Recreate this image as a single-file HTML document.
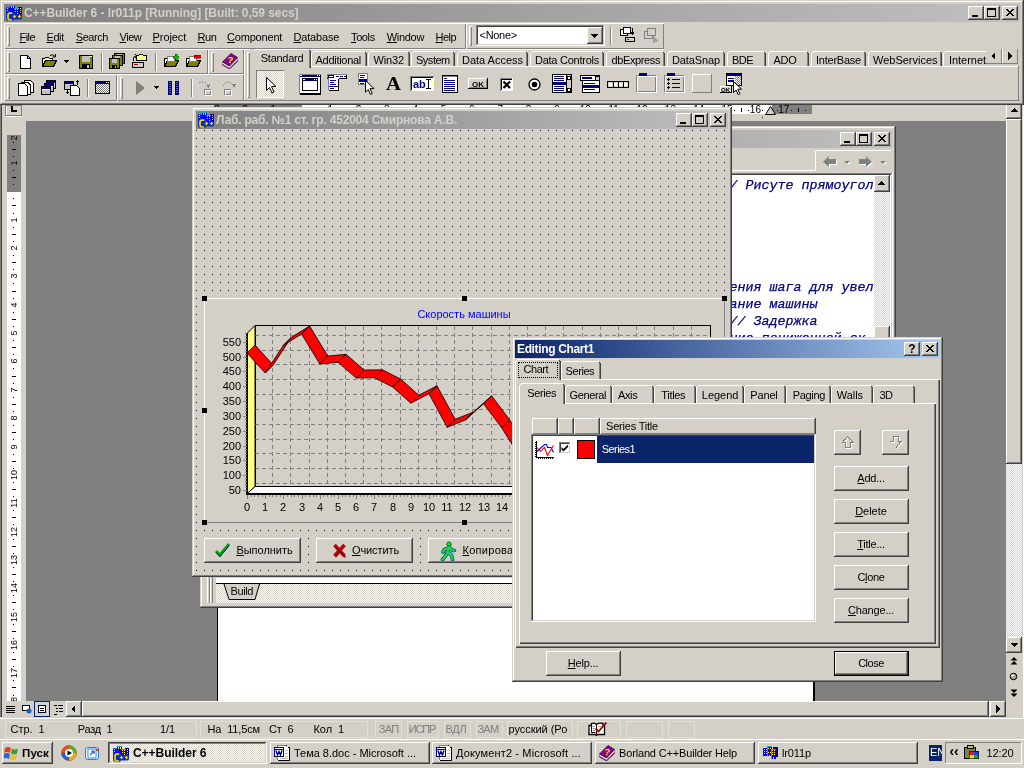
<!DOCTYPE html>
<html><head><meta charset="utf-8"><title>C++Builder 6</title>
<style>
html,body{margin:0;padding:0;}
body{width:1024px;height:768px;overflow:hidden;background:#d4d0c8;font-family:"Liberation Sans",sans-serif;font-size:11px;color:#000;}
#root{will-change:transform;position:relative;width:1024px;height:768px;overflow:hidden;}
#root div,#root span,#root svg{position:absolute;box-sizing:border-box;}
#root span{white-space:pre;line-height:13px;}
.face{background:#d4d0c8;}
.win{background:#d4d0c8;box-shadow:inset -1px -1px #404040,inset 1px 1px #d4d0c8,inset -2px -2px #808080,inset 2px 2px #fff;}
.btn{background:#d4d0c8;box-shadow:inset -1px -1px #404040,inset 1px 1px #fff,inset -2px -2px #808080,inset 2px 2px #d4d0c8;}
.sunk{box-shadow:inset -1px -1px #fff,inset 1px 1px #808080,inset -2px -2px #d4d0c8,inset 2px 2px #404040;}
.thin-sunk{box-shadow:inset -1px -1px #fff,inset 1px 1px #808080;}
.thin-rais{box-shadow:inset -1px -1px #808080,inset 1px 1px #fff;}
.chk{background:repeating-conic-gradient(#fff 0 25%,#d4d0c8 0 50%) 0 0/2px 2px;}
.b{font-weight:bold;}
u{text-decoration:underline;text-underline-offset:1px;}

</style></head>
<body>
<div id="root"><svg width="0" height="0" style="left:0;top:0"><defs><pattern id="dotpat" width="2" height="2" patternUnits="userSpaceOnUse"><rect width="2" height="2" fill="#fff"/><rect width="1" height="1" fill="#808080"/><rect x="1" y="1" width="1" height="1" fill="#808080"/></pattern></defs></svg>
<!-- p_word -->
<div class="face" style="left:0px;top:105px;width:1024px;height:635px;"></div><div style="left:0px;top:105px;width:1px;height:612px;background:#808080;"></div><div style="left:1px;top:105px;width:1px;height:612px;background:#404040;"></div><div style="left:5px;top:105px;width:17px;height:11px;background:#d4d0c8;border:1px solid #808080;box-shadow:inset 1px 0 #fff;"></div><div style="left:5px;top:116px;width:17px;height:1px;background:#fff;"></div><div style="left:11px;top:106px;width:2px;height:6px;background:#000;"></div><div style="left:11px;top:110px;width:6px;height:2px;background:#000;"></div><div style="left:214px;top:105px;width:88px;height:9px;background:#808080;"></div><div style="left:302px;top:105px;width:470px;height:9px;background:#fff;"></div><div style="left:772px;top:105px;width:40px;height:9px;background:#808080;"></div><span style="left:320.2px;top:104px;width:20px;text-align:center;font-size:10px;line-height:12px;">1</span><span style="left:348.5px;top:104px;width:20px;text-align:center;font-size:10px;line-height:12px;">2</span><span style="left:376.9px;top:104px;width:20px;text-align:center;font-size:10px;line-height:12px;">3</span><span style="left:405.2px;top:104px;width:20px;text-align:center;font-size:10px;line-height:12px;">4</span><span style="left:433.6px;top:104px;width:20px;text-align:center;font-size:10px;line-height:12px;">5</span><span style="left:461.9px;top:104px;width:20px;text-align:center;font-size:10px;line-height:12px;">6</span><span style="left:490.2px;top:104px;width:20px;text-align:center;font-size:10px;line-height:12px;">7</span><span style="left:518.6px;top:104px;width:20px;text-align:center;font-size:10px;line-height:12px;">8</span><span style="left:547.0px;top:104px;width:20px;text-align:center;font-size:10px;line-height:12px;">9</span><span style="left:575.3px;top:104px;width:20px;text-align:center;font-size:10px;line-height:12px;">10</span><span style="left:603.7px;top:104px;width:20px;text-align:center;font-size:10px;line-height:12px;">11</span><span style="left:632.0px;top:104px;width:20px;text-align:center;font-size:10px;line-height:12px;">12</span><span style="left:660.4px;top:104px;width:20px;text-align:center;font-size:10px;line-height:12px;">13</span><span style="left:688.7px;top:104px;width:20px;text-align:center;font-size:10px;line-height:12px;">14</span><span style="left:717.0px;top:104px;width:20px;text-align:center;font-size:10px;line-height:12px;">15</span><span style="left:745.4px;top:104px;width:20px;text-align:center;font-size:10px;line-height:12px;">16</span><span style="left:773.8px;top:104px;width:20px;text-align:center;font-size:10px;line-height:12px;">17</span><span style="left:263.4px;top:104px;width:20px;text-align:center;font-size:10px;line-height:12px;">1</span><span style="left:235.1px;top:104px;width:20px;text-align:center;font-size:10px;line-height:12px;">2</span><span style="left:206.8px;top:104px;width:20px;text-align:center;font-size:10px;line-height:12px;">3</span><div style="left:224px;top:110px;width:1px;height:1px;background:#000;"></div><div style="left:231px;top:108px;width:1px;height:4px;background:#000;"></div><div style="left:238px;top:110px;width:1px;height:1px;background:#000;"></div><div style="left:252px;top:110px;width:1px;height:1px;background:#000;"></div><div style="left:259px;top:108px;width:1px;height:4px;background:#000;"></div><div style="left:266px;top:110px;width:1px;height:1px;background:#000;"></div><div style="left:281px;top:110px;width:1px;height:1px;background:#000;"></div><div style="left:288px;top:108px;width:1px;height:4px;background:#000;"></div><div style="left:295px;top:110px;width:1px;height:1px;background:#000;"></div><div style="left:309px;top:110px;width:1px;height:1px;background:#000;"></div><div style="left:316px;top:108px;width:1px;height:4px;background:#000;"></div><div style="left:323px;top:110px;width:1px;height:1px;background:#000;"></div><div style="left:337px;top:110px;width:1px;height:1px;background:#000;"></div><div style="left:344px;top:108px;width:1px;height:4px;background:#000;"></div><div style="left:351px;top:110px;width:1px;height:1px;background:#000;"></div><div style="left:366px;top:110px;width:1px;height:1px;background:#000;"></div><div style="left:373px;top:108px;width:1px;height:4px;background:#000;"></div><div style="left:380px;top:110px;width:1px;height:1px;background:#000;"></div><div style="left:394px;top:110px;width:1px;height:1px;background:#000;"></div><div style="left:401px;top:108px;width:1px;height:4px;background:#000;"></div><div style="left:408px;top:110px;width:1px;height:1px;background:#000;"></div><div style="left:422px;top:110px;width:1px;height:1px;background:#000;"></div><div style="left:429px;top:108px;width:1px;height:4px;background:#000;"></div><div style="left:436px;top:110px;width:1px;height:1px;background:#000;"></div><div style="left:451px;top:110px;width:1px;height:1px;background:#000;"></div><div style="left:458px;top:108px;width:1px;height:4px;background:#000;"></div><div style="left:465px;top:110px;width:1px;height:1px;background:#000;"></div><div style="left:479px;top:110px;width:1px;height:1px;background:#000;"></div><div style="left:486px;top:108px;width:1px;height:4px;background:#000;"></div><div style="left:493px;top:110px;width:1px;height:1px;background:#000;"></div><div style="left:507px;top:110px;width:1px;height:1px;background:#000;"></div><div style="left:514px;top:108px;width:1px;height:4px;background:#000;"></div><div style="left:522px;top:110px;width:1px;height:1px;background:#000;"></div><div style="left:536px;top:110px;width:1px;height:1px;background:#000;"></div><div style="left:543px;top:108px;width:1px;height:4px;background:#000;"></div><div style="left:550px;top:110px;width:1px;height:1px;background:#000;"></div><div style="left:564px;top:110px;width:1px;height:1px;background:#000;"></div><div style="left:571px;top:108px;width:1px;height:4px;background:#000;"></div><div style="left:578px;top:110px;width:1px;height:1px;background:#000;"></div><div style="left:592px;top:110px;width:1px;height:1px;background:#000;"></div><div style="left:599px;top:108px;width:1px;height:4px;background:#000;"></div><div style="left:607px;top:110px;width:1px;height:1px;background:#000;"></div><div style="left:621px;top:110px;width:1px;height:1px;background:#000;"></div><div style="left:628px;top:108px;width:1px;height:4px;background:#000;"></div><div style="left:635px;top:110px;width:1px;height:1px;background:#000;"></div><div style="left:649px;top:110px;width:1px;height:1px;background:#000;"></div><div style="left:656px;top:108px;width:1px;height:4px;background:#000;"></div><div style="left:663px;top:110px;width:1px;height:1px;background:#000;"></div><div style="left:677px;top:110px;width:1px;height:1px;background:#000;"></div><div style="left:685px;top:108px;width:1px;height:4px;background:#000;"></div><div style="left:692px;top:110px;width:1px;height:1px;background:#000;"></div><div style="left:706px;top:110px;width:1px;height:1px;background:#000;"></div><div style="left:713px;top:108px;width:1px;height:4px;background:#000;"></div><div style="left:720px;top:110px;width:1px;height:1px;background:#000;"></div><div style="left:734px;top:110px;width:1px;height:1px;background:#000;"></div><div style="left:741px;top:108px;width:1px;height:4px;background:#000;"></div><div style="left:748px;top:110px;width:1px;height:1px;background:#000;"></div><div style="left:762px;top:110px;width:1px;height:1px;background:#000;"></div><div style="left:770px;top:108px;width:1px;height:4px;background:#000;"></div><div style="left:777px;top:110px;width:1px;height:1px;background:#000;"></div><div style="left:791px;top:110px;width:1px;height:1px;background:#000;"></div><div style="left:798px;top:108px;width:1px;height:4px;background:#000;"></div><div style="left:805px;top:110px;width:1px;height:1px;background:#000;"></div><svg style="left:765px;top:105px;shape-rendering:auto" width="12" height="11" viewBox="0 0 12 11" shape-rendering="crispEdges"><path d="M0.5 9.5 L5.5 1.5 L10.5 9.5 Z" fill="#d4d0c8" stroke="#000" stroke-width="1" /></svg><div style="left:762px;top:116px;width:1px;height:3px;background:#808080;"></div><div style="left:26px;top:121px;width:980px;height:580px;background:#808080;"></div><div style="left:218px;top:135px;width:595px;height:566px;background:#fff;"></div><div style="left:813px;top:135px;width:2px;height:566px;background:#000;"></div><div style="left:217px;top:135px;width:1px;height:566px;background:#000;"></div><div style="left:7px;top:135px;width:14px;height:57px;background:#808080;"></div><div style="left:7px;top:192px;width:14px;height:509px;background:#fff;"></div><div style="left:0;top:135px;width:24px;height:566px;overflow:hidden;"><span style="left:4px;top:22.0px;width:20px;height:12px;line-height:12px;font-size:9px;text-align:center;transform:rotate(-90deg);">1</span><span style="left:4px;top:-3.0px;width:20px;height:12px;line-height:12px;font-size:9px;text-align:center;transform:rotate(-90deg);">2</span><span style="left:4px;top:78.7px;width:20px;height:12px;line-height:12px;font-size:9px;text-align:center;transform:rotate(-90deg);">1</span><span style="left:4px;top:107.0px;width:20px;height:12px;line-height:12px;font-size:9px;text-align:center;transform:rotate(-90deg);">2</span><span style="left:4px;top:135.4px;width:20px;height:12px;line-height:12px;font-size:9px;text-align:center;transform:rotate(-90deg);">3</span><span style="left:4px;top:163.7px;width:20px;height:12px;line-height:12px;font-size:9px;text-align:center;transform:rotate(-90deg);">4</span><span style="left:4px;top:192.1px;width:20px;height:12px;line-height:12px;font-size:9px;text-align:center;transform:rotate(-90deg);">5</span><span style="left:4px;top:220.4px;width:20px;height:12px;line-height:12px;font-size:9px;text-align:center;transform:rotate(-90deg);">6</span><span style="left:4px;top:248.8px;width:20px;height:12px;line-height:12px;font-size:9px;text-align:center;transform:rotate(-90deg);">7</span><span style="left:4px;top:277.1px;width:20px;height:12px;line-height:12px;font-size:9px;text-align:center;transform:rotate(-90deg);">8</span><span style="left:4px;top:305.5px;width:20px;height:12px;line-height:12px;font-size:9px;text-align:center;transform:rotate(-90deg);">9</span><span style="left:4px;top:333.8px;width:20px;height:12px;line-height:12px;font-size:9px;text-align:center;transform:rotate(-90deg);">10</span><span style="left:4px;top:362.2px;width:20px;height:12px;line-height:12px;font-size:9px;text-align:center;transform:rotate(-90deg);">11</span><span style="left:4px;top:390.5px;width:20px;height:12px;line-height:12px;font-size:9px;text-align:center;transform:rotate(-90deg);">12</span><span style="left:4px;top:418.9px;width:20px;height:12px;line-height:12px;font-size:9px;text-align:center;transform:rotate(-90deg);">13</span><span style="left:4px;top:447.2px;width:20px;height:12px;line-height:12px;font-size:9px;text-align:center;transform:rotate(-90deg);">14</span><span style="left:4px;top:475.5px;width:20px;height:12px;line-height:12px;font-size:9px;text-align:center;transform:rotate(-90deg);">15</span><span style="left:4px;top:503.9px;width:20px;height:12px;line-height:12px;font-size:9px;text-align:center;transform:rotate(-90deg);">16</span><span style="left:4px;top:532.2px;width:20px;height:12px;line-height:12px;font-size:9px;text-align:center;transform:rotate(-90deg);">17</span><span style="left:4px;top:560.6px;width:20px;height:12px;line-height:12px;font-size:9px;text-align:center;transform:rotate(-90deg);">18</span><div style="left:13px;top:7px;width:1px;height:1px;background:#000;"></div><div style="left:12px;top:14px;width:4px;height:1px;background:#000;"></div><div style="left:13px;top:21px;width:1px;height:1px;background:#000;"></div><div style="left:13px;top:35px;width:1px;height:1px;background:#000;"></div><div style="left:12px;top:42px;width:4px;height:1px;background:#000;"></div><div style="left:13px;top:49px;width:1px;height:1px;background:#000;"></div><div style="left:13px;top:63px;width:1px;height:1px;background:#000;"></div><div style="left:12px;top:70px;width:4px;height:1px;background:#000;"></div><div style="left:13px;top:78px;width:1px;height:1px;background:#000;"></div><div style="left:13px;top:92px;width:1px;height:1px;background:#000;"></div><div style="left:12px;top:99px;width:4px;height:1px;background:#000;"></div><div style="left:13px;top:106px;width:1px;height:1px;background:#000;"></div><div style="left:13px;top:120px;width:1px;height:1px;background:#000;"></div><div style="left:12px;top:127px;width:4px;height:1px;background:#000;"></div><div style="left:13px;top:134px;width:1px;height:1px;background:#000;"></div><div style="left:13px;top:148px;width:1px;height:1px;background:#000;"></div><div style="left:12px;top:156px;width:4px;height:1px;background:#000;"></div><div style="left:13px;top:163px;width:1px;height:1px;background:#000;"></div><div style="left:13px;top:177px;width:1px;height:1px;background:#000;"></div><div style="left:12px;top:184px;width:4px;height:1px;background:#000;"></div><div style="left:13px;top:191px;width:1px;height:1px;background:#000;"></div><div style="left:13px;top:205px;width:1px;height:1px;background:#000;"></div><div style="left:12px;top:212px;width:4px;height:1px;background:#000;"></div><div style="left:13px;top:219px;width:1px;height:1px;background:#000;"></div><div style="left:13px;top:233px;width:1px;height:1px;background:#000;"></div><div style="left:12px;top:241px;width:4px;height:1px;background:#000;"></div><div style="left:13px;top:248px;width:1px;height:1px;background:#000;"></div><div style="left:13px;top:262px;width:1px;height:1px;background:#000;"></div><div style="left:12px;top:269px;width:4px;height:1px;background:#000;"></div><div style="left:13px;top:276px;width:1px;height:1px;background:#000;"></div><div style="left:13px;top:290px;width:1px;height:1px;background:#000;"></div><div style="left:12px;top:297px;width:4px;height:1px;background:#000;"></div><div style="left:13px;top:304px;width:1px;height:1px;background:#000;"></div><div style="left:13px;top:319px;width:1px;height:1px;background:#000;"></div><div style="left:12px;top:326px;width:4px;height:1px;background:#000;"></div><div style="left:13px;top:333px;width:1px;height:1px;background:#000;"></div><div style="left:13px;top:347px;width:1px;height:1px;background:#000;"></div><div style="left:12px;top:354px;width:4px;height:1px;background:#000;"></div><div style="left:13px;top:361px;width:1px;height:1px;background:#000;"></div><div style="left:13px;top:375px;width:1px;height:1px;background:#000;"></div><div style="left:12px;top:382px;width:4px;height:1px;background:#000;"></div><div style="left:13px;top:389px;width:1px;height:1px;background:#000;"></div><div style="left:13px;top:404px;width:1px;height:1px;background:#000;"></div><div style="left:12px;top:411px;width:4px;height:1px;background:#000;"></div><div style="left:13px;top:418px;width:1px;height:1px;background:#000;"></div><div style="left:13px;top:432px;width:1px;height:1px;background:#000;"></div><div style="left:12px;top:439px;width:4px;height:1px;background:#000;"></div><div style="left:13px;top:446px;width:1px;height:1px;background:#000;"></div><div style="left:13px;top:460px;width:1px;height:1px;background:#000;"></div><div style="left:12px;top:467px;width:4px;height:1px;background:#000;"></div><div style="left:13px;top:474px;width:1px;height:1px;background:#000;"></div><div style="left:13px;top:489px;width:1px;height:1px;background:#000;"></div><div style="left:12px;top:496px;width:4px;height:1px;background:#000;"></div><div style="left:13px;top:503px;width:1px;height:1px;background:#000;"></div><div style="left:13px;top:517px;width:1px;height:1px;background:#000;"></div><div style="left:12px;top:524px;width:4px;height:1px;background:#000;"></div><div style="left:13px;top:531px;width:1px;height:1px;background:#000;"></div><div style="left:13px;top:545px;width:1px;height:1px;background:#000;"></div><div style="left:12px;top:552px;width:4px;height:1px;background:#000;"></div><div style="left:13px;top:560px;width:1px;height:1px;background:#000;"></div></div><div class="chk" style="left:1006px;top:105px;width:16px;height:596px;"></div><div class="btn" style="left:1006px;top:102px;width:16px;height:17px;"><svg style="left:0px;top:0px;" width="16" height="17" viewBox="0 0 16 17" shape-rendering="crispEdges"><path d="M4 10 L8.0 6 L12 10 Z" fill="#000" stroke="none" stroke-width="1" /></svg></div><div class="btn" style="left:1006px;top:119px;width:16px;height:345px;"></div><div class="btn" style="left:1006px;top:637px;width:16px;height:16px;"><svg style="left:0px;top:0px;" width="16" height="16" viewBox="0 0 16 16" shape-rendering="crispEdges"><path d="M4 6 L12 6 L8 10 Z" fill="#000" stroke="none" stroke-width="1" /></svg></div><div class="face" style="left:1006px;top:653px;width:16px;height:48px;"></div><svg style="left:1006px;top:653px;shape-rendering:auto" width="16" height="48" viewBox="0 0 16 48" shape-rendering="crispEdges"><path d="M4.5 7.5 h7 l-3.5 -3.5 z M4.5 11.5 h7 l-3.5 -3.5 z" fill="#000" stroke="none" stroke-width="1" /><circle cx="7.5" cy="23.5" r="3.3" fill="#a0a0a0" stroke="#000" stroke-width="1"/><circle cx="6.5" cy="22.5" r="1.2" fill="#fff"/><path d="M4.5 36.5 h7 l-3.5 3.5 z M4.5 40.5 h7 l-3.5 3.5 z" fill="#000" stroke="none" stroke-width="1" /></svg><div style="left:1022px;top:105px;width:1px;height:635px;background:#d4d0c8;"></div><div style="left:1023px;top:105px;width:1px;height:635px;background:#fff;"></div><div class="face" style="left:2px;top:701px;width:1004px;height:16px;"></div><svg style="left:4px;top:702px;" width="14" height="14" viewBox="0 0 14 14" shape-rendering="crispEdges"><rect x="2" y="4" width="9" height="1" fill="#000" /><rect x="2" y="6" width="9" height="1" fill="#000" /><rect x="2" y="8" width="9" height="1" fill="#000" /><rect x="2" y="10" width="9" height="1" fill="#000" /></svg><svg style="left:19px;top:702px;" width="14" height="14" viewBox="0 0 14 14" shape-rendering="crispEdges"><rect x="3.5" y="3.5" width="7" height="5" fill="#fff" stroke="#000"/><circle cx="10" cy="9" r="2.5" fill="#1a5fb4" shape-rendering="auto"/></svg><div style="left:34px;top:701px;width:16px;height:16px;background:#d0d3dc;border:1px solid #0a246a;"></div><svg style="left:35px;top:702px;" width="14" height="14" viewBox="0 0 14 14" shape-rendering="crispEdges"><rect x="3.5" y="3.5" width="7" height="7" fill="#fff" stroke="#000"/><rect x="5" y="6" width="4" height="1" fill="#000" /><rect x="5" y="8" width="4" height="1" fill="#000" /></svg><svg style="left:51px;top:702px;" width="14" height="14" viewBox="0 0 14 14" shape-rendering="crispEdges"><rect x="3" y="3" width="3" height="1" fill="#000" /><rect x="7" y="3" width="5" height="1" fill="#000" /><rect x="5" y="6" width="2" height="1" fill="#000" /><rect x="8" y="6" width="4" height="1" fill="#000" /><rect x="5" y="9" width="2" height="1" fill="#000" /><rect x="8" y="9" width="4" height="1" fill="#000" /><rect x="3" y="12" width="3" height="1" fill="#000" /></svg><div class="chk" style="left:66px;top:701px;width:940px;height:16px;"></div><div class="btn" style="left:66px;top:701px;width:16px;height:16px;"><svg style="left:0px;top:0px;" width="16" height="16" viewBox="0 0 16 16" shape-rendering="crispEdges"><path d="M9 4 L9 12 L5 8 Z" fill="#000" stroke="none" stroke-width="1" /></svg></div><div class="btn" style="left:82px;top:701px;width:907px;height:16px;"></div><div class="btn" style="left:990px;top:701px;width:16px;height:16px;"><svg style="left:0px;top:0px;" width="16" height="16" viewBox="0 0 16 16" shape-rendering="crispEdges"><path d="M6 4 L6 12 L10 8 Z" fill="#000" stroke="none" stroke-width="1" /></svg></div><div class="face" style="left:1006px;top:701px;width:16px;height:16px;"></div><div class="face" style="left:0px;top:717px;width:1024px;height:21px;"></div><div style="left:0px;top:718px;width:1024px;height:1px;background:#fff;"></div><div style="left:5px;top:721px;width:192px;height:17px;border:1px solid #e3e0d9;"></div><div style="left:200px;top:721px;width:168px;height:17px;border:1px solid #e3e0d9;"></div><div style="left:375px;top:721px;width:27px;height:17px;border:1px solid #e3e0d9;"></div><div style="left:407px;top:721px;width:32px;height:17px;border:1px solid #e3e0d9;"></div><div style="left:444px;top:721px;width:27px;height:17px;border:1px solid #e3e0d9;"></div><div style="left:476px;top:721px;width:27px;height:17px;border:1px solid #e3e0d9;"></div><div style="left:507px;top:721px;width:66px;height:17px;border:1px solid #e3e0d9;"></div><div style="left:577px;top:721px;width:44px;height:17px;border:1px solid #e3e0d9;"></div><div style="left:626px;top:721px;width:37px;height:17px;border:1px solid #e3e0d9;"></div><div style="left:668px;top:721px;width:27px;height:17px;border:1px solid #e3e0d9;"></div><span style="left:10.6px;top:723px;font-size:11px;letter-spacing:-0.055px;">Стр.  1</span><span style="left:77.7px;top:723px;font-size:11px;letter-spacing:-0.231px;">Разд  1</span><span style="left:160px;top:723px;font-size:11px;letter-spacing:-0.097px;">1/1</span><span style="left:207.5px;top:723px;font-size:11px;letter-spacing:-0.133px;">На  11,5см</span><span style="left:269px;top:723px;font-size:11px;letter-spacing:-0.142px;">Ст  6</span><span style="left:313.5px;top:723px;font-size:11px;letter-spacing:-0.072px;">Кол  1</span><span style="left:378.75px;top:723px;font-size:11px;letter-spacing:-0.621px;color:#808080;">ЗАП</span><span style="left:408.75px;top:723px;font-size:11px;letter-spacing:-1.148px;color:#808080;">ИСПР</span><span style="left:445.5px;top:723px;font-size:11px;letter-spacing:-0.321px;color:#808080;">ВДЛ</span><span style="left:477.5px;top:723px;font-size:11px;letter-spacing:-0.781px;color:#808080;">ЗАМ</span><span style="left:508.6px;top:723px;font-size:11px;letter-spacing:-0.051px;">русский (Ро</span><svg style="left:588px;top:722px;shape-rendering:auto" width="20" height="14" viewBox="0 0 20 14" shape-rendering="crispEdges"><path d="M1 3.5 H3.5 V1.5 Q6 0.5 8.5 2.5 Q11 0.5 15 1.5 V3.5 H16.5 V12.5 H9.5 L8.5 13.5 L7.5 12.5 H1 Z" fill="#fff" stroke="#000" stroke-width="1.3" /><path d="M3.5 3.5 V10.5 H7.5 M8.5 2.5 V12.5" fill="none" stroke="#000" stroke-width="1" /><path d="M4.5 4.5 h2.5 M4.5 6.5 h2.5 M4.5 8.5 h2.5 M10.5 4.5 h3" fill="none" stroke="#a0a0a0" stroke-width="1" /><path d="M7.5 6.5 L10.5 9.5 L18.5 0.5" fill="none" stroke="#a00000" stroke-width="1.8" /></svg>
<!-- p_editor -->
<div class="win" style="left:200px;top:126px;width:696px;height:482px;"></div><div style="left:204px;top:130px;width:688px;height:18px;background:linear-gradient(90deg,#808080,#c0c0c0);"></div><div class="btn" style="left:840px;top:132px;width:16px;height:14px;"><svg style="left:0px;top:0px;" width="16" height="14" viewBox="0 0 16 14" shape-rendering="crispEdges"><rect x="4" y="9" width="6" height="2" fill="#000" /></svg></div><div class="btn" style="left:856px;top:132px;width:16px;height:14px;"><svg style="left:0px;top:0px;" width="16" height="14" viewBox="0 0 16 14" shape-rendering="crispEdges"><rect x="3.5" y="3.5" width="8" height="7" fill="none" stroke="#000"/><rect x="3" y="2" width="9" height="2" fill="#000" /></svg></div><div class="btn" style="left:874px;top:132px;width:16px;height:14px;"><svg style="left:0px;top:0px;" width="16" height="14" viewBox="0 0 16 14" shape-rendering="crispEdges"><path d="M4 3h2v1h1v1h2v-1h1v-1h2v1h-1v1h-1v1h-1v1h1v1h1v1h1v1h-2v-1h-1v-1h-2v1h-1v1h-2v-1h1v-1h1v-1h1v-1h-1v-1h-1v-1h-1z" fill="#000" stroke="none" stroke-width="1" /></svg></div><div style="left:204px;top:170px;width:612px;height:1px;background:#fff;"></div><div style="left:815px;top:151px;width:1px;height:20px;background:#fff;"></div><div style="left:816px;top:150px;width:75px;height:1px;background:#fff;"></div><svg style="left:822px;top:156px;shape-rendering:auto" width="70" height="13" viewBox="0 0 70 13" shape-rendering="crispEdges"><g transform="translate(1 1)" fill="#fff"><path d="M1 6 L7 0 V3 H14 V8 H7 V11 Z"/><path d="M22 5 h6 l-3 3 z"/><path d="M50 6 L44 0 V3 H37 V8 H44 V11 Z"/><path d="M58 5 h6 l-3 3 z"/></g><path d="M1 6 L7 0 V3 H14 V8 H7 V11 Z" fill="#808080" stroke="none" stroke-width="1" /><path d="M22 5 h6 l-3 3 z" fill="#808080" stroke="none" stroke-width="1" /><path d="M50 6 L44 0 V3 H37 V8 H44 V11 Z" fill="#808080" stroke="none" stroke-width="1" /><path d="M58 5 h6 l-3 3 z" fill="#808080" stroke="none" stroke-width="1" /></svg><div class="sunk" style="left:204px;top:173px;width:689px;height:410px;background:#fff;"></div><div style="left:206px;top:175px;width:668px;height:406px;overflow:hidden;"><span style="left:523.5px;top:2.5px;font-family:'Liberation Mono',monospace;font-size:13.33px;font-weight:normal;-webkit-text-stroke:0.25px #000080;font-style:italic;color:#000080;line-height:15px;">/ Рисуте прямоугол</span><span style="left:523.5px;top:104.5px;font-family:'Liberation Mono',monospace;font-size:13.33px;font-weight:normal;-webkit-text-stroke:0.25px #000080;font-style:italic;color:#000080;line-height:15px;">ения шага для увел</span><span style="left:523.5px;top:121.5px;font-family:'Liberation Mono',monospace;font-size:13.33px;font-weight:normal;-webkit-text-stroke:0.25px #000080;font-style:italic;color:#000080;line-height:15px;">ание машины</span><span style="left:523.5px;top:138.5px;font-family:'Liberation Mono',monospace;font-size:13.33px;font-weight:normal;-webkit-text-stroke:0.25px #000080;font-style:italic;color:#000080;line-height:15px;">// Задержка</span><span style="left:523.5px;top:155.5px;font-family:'Liberation Mono',monospace;font-size:13.33px;font-weight:normal;-webkit-text-stroke:0.25px #000080;font-style:italic;color:#000080;line-height:15px;">ние пониженной ск</span></div><div class="chk" style="left:874px;top:175px;width:16px;height:406px;"></div><div class="btn" style="left:874px;top:175px;width:16px;height:17px;"><svg style="left:0px;top:0px;" width="16" height="17" viewBox="0 0 16 17" shape-rendering="crispEdges"><path d="M4 10 h7 l-3.5 -4 z" fill="#000" stroke="none" stroke-width="1" /></svg></div><div class="btn" style="left:874px;top:326px;width:16px;height:60px;"></div><div class="face" style="left:204px;top:577px;width:688px;height:27px;"></div><div style="left:207px;top:577px;width:3px;height:26px;box-shadow:inset 1px 0 #fff,inset -1px 0 #808080;"></div><div style="left:210px;top:577px;width:3px;height:26px;box-shadow:inset 1px 0 #fff,inset -1px 0 #808080;"></div><div style="left:216px;top:578px;width:676px;height:5px;background:#fff;"></div><div style="left:216px;top:583px;width:676px;height:1px;background:#000;"></div><div class="chk" style="left:216px;top:584px;width:676px;height:19px;"></div><svg style="left:223px;top:584px;shape-rendering:auto" width="40" height="16" viewBox="0 0 40 16" shape-rendering="crispEdges"><path d="M1 0 L6 15.5 H32 L36.5 0" fill="#d4d0c8" stroke="#000" stroke-width="1" /></svg><span style="left:230.5px;top:585px;font-size:11px;letter-spacing:-0.392px;">Build</span>
<!-- p_form -->
<div class="win" style="left:192px;top:107px;width:540px;height:470px;"></div><div style="left:196px;top:111px;width:532px;height:18px;background:linear-gradient(90deg,#808080,#c0c0c0);"></div><svg style="left:198px;top:112px;" width="16" height="16" viewBox="0 0 16 16" shape-rendering="crispEdges"><rect x="0" y="2" width="4" height="7" fill="#0020e0" /><rect x="0" y="2" width="4" height="1" fill="#2060d0" /><rect x="1" y="3" width="1" height="1" fill="#ffe000" /><rect x="1" y="5" width="1" height="1" fill="#ffe000" /><rect x="4" y="0" width="5" height="8" fill="#0000ff" /><rect x="4" y="0" width="5" height="1" fill="#20a0e0" /><rect x="8" y="1" width="1" height="3" fill="#000080" /><rect x="5" y="1" width="1" height="2" fill="#ffe000" /><rect x="7" y="1" width="1" height="2" fill="#ffe000" /><rect x="12" y="2" width="4" height="9" fill="#000080" /><rect x="14" y="3" width="1" height="1" fill="#ffe000" /><rect x="14" y="5" width="1" height="1" fill="#ffe000" /><rect x="14" y="7" width="1" height="1" fill="#ffe000" /><rect x="8" y="3" width="5" height="8" fill="#0000ff" /><rect x="8" y="3" width="5" height="1" fill="#20a0e0" /><rect x="9" y="4" width="1" height="1" fill="#ffe000" /><rect x="11" y="4" width="1" height="1" fill="#ffe000" /><rect x="9" y="6" width="1" height="1" fill="#ffe000" /><rect x="11" y="6" width="1" height="1" fill="#ffe000" /><rect x="11" y="8" width="1" height="1" fill="#ffe000" /><path d="M0 8 Q0 7 2 7 H7 L8 9 H16 V13 Q16 14.5 14 14.5 H8 L7 16 H3 Q0 16 0 13 Z" fill="#0030c0" shape-rendering="auto"/><path d="M6.2 8.2 H4 Q2 8.2 2 10.5 V12.5 Q2 15 4 15 H6.2" fill="none" stroke="#ffd000" stroke-width="1.7" shape-rendering="auto"/><path d="M8.5 9.6 L9.3 10.7 L10.4 11.5 L9.3 12.3 L8.5 13.4 L7.7 12.3 L6.6 11.5 L7.7 10.7 Z M13.5 9.6 L14.3 10.7 L15.4 11.5 L14.3 12.3 L13.5 13.4 L12.7 12.3 L11.6 11.5 L12.7 10.7 Z" fill="#ffd000" shape-rendering="auto"/></svg><span style="left:216px;top:113px;font-size:12px;letter-spacing:-0.208px;font-weight:bold;color:#d4d0c8;line-height:14px;">Лаб. раб. №1 ст. гр. 452004 Смирнова А.В.</span><div class="btn" style="left:676px;top:113px;width:16px;height:14px;"><svg style="left:0px;top:0px;" width="16" height="14" viewBox="0 0 16 14" shape-rendering="crispEdges"><rect x="4" y="9" width="6" height="2" fill="#000" /></svg></div><div class="btn" style="left:692px;top:113px;width:16px;height:14px;"><svg style="left:0px;top:0px;" width="16" height="14" viewBox="0 0 16 14" shape-rendering="crispEdges"><rect x="3.5" y="3.5" width="8" height="7" fill="none" stroke="#000"/><rect x="3" y="2" width="9" height="2" fill="#000" /></svg></div><div class="btn" style="left:710px;top:113px;width:16px;height:14px;"><svg style="left:0px;top:0px;" width="16" height="14" viewBox="0 0 16 14" shape-rendering="crispEdges"><path d="M4 3h2v1h1v1h2v-1h1v-1h2v1h-1v1h-1v1h-1v1h1v1h1v1h1v1h-2v-1h-1v-1h-2v1h-1v1h-2v-1h1v-1h1v-1h1v-1h-1v-1h-1v-1h-1z" fill="#000" stroke="none" stroke-width="1" /></svg></div><div style="left:196px;top:130px;width:532px;height:443px;background-color:#d4d0c8;background-image:linear-gradient(90deg,transparent 1px,#d4d0c8 1px),linear-gradient(180deg,#000 1px,transparent 1px);background-size:8px 8px;"></div><div class="face" style="left:204px;top:298px;width:521px;height:225px;box-shadow:inset 1px 1px #fff,inset -1px -1px #808080;"></div><svg style="left:204px;top:298px;" width="521" height="225" viewBox="0 0 521 225" shape-rendering="crispEdges"><rect x="51.0" y="27.5" width="455.0" height="161.0" fill="#d4d0c8" stroke="#000" stroke-width="1"/><line x1="68.5" y1="27.5" x2="68.5" y2="188.5" stroke="#808080" stroke-dasharray="4 3"/><line x1="86.5" y1="27.5" x2="86.5" y2="188.5" stroke="#808080" stroke-dasharray="4 3"/><line x1="105.5" y1="27.5" x2="105.5" y2="188.5" stroke="#808080" stroke-dasharray="4 3"/><line x1="123.5" y1="27.5" x2="123.5" y2="188.5" stroke="#808080" stroke-dasharray="4 3"/><line x1="141.5" y1="27.5" x2="141.5" y2="188.5" stroke="#808080" stroke-dasharray="4 3"/><line x1="159.5" y1="27.5" x2="159.5" y2="188.5" stroke="#808080" stroke-dasharray="4 3"/><line x1="177.5" y1="27.5" x2="177.5" y2="188.5" stroke="#808080" stroke-dasharray="4 3"/><line x1="196.5" y1="27.5" x2="196.5" y2="188.5" stroke="#808080" stroke-dasharray="4 3"/><line x1="214.5" y1="27.5" x2="214.5" y2="188.5" stroke="#808080" stroke-dasharray="4 3"/><line x1="232.5" y1="27.5" x2="232.5" y2="188.5" stroke="#808080" stroke-dasharray="4 3"/><line x1="250.5" y1="27.5" x2="250.5" y2="188.5" stroke="#808080" stroke-dasharray="4 3"/><line x1="268.5" y1="27.5" x2="268.5" y2="188.5" stroke="#808080" stroke-dasharray="4 3"/><line x1="287.5" y1="27.5" x2="287.5" y2="188.5" stroke="#808080" stroke-dasharray="4 3"/><line x1="305.5" y1="27.5" x2="305.5" y2="188.5" stroke="#808080" stroke-dasharray="4 3"/><line x1="323.5" y1="27.5" x2="323.5" y2="188.5" stroke="#808080" stroke-dasharray="4 3"/><line x1="341.5" y1="27.5" x2="341.5" y2="188.5" stroke="#808080" stroke-dasharray="4 3"/><line x1="359.5" y1="27.5" x2="359.5" y2="188.5" stroke="#808080" stroke-dasharray="4 3"/><line x1="378.5" y1="27.5" x2="378.5" y2="188.5" stroke="#808080" stroke-dasharray="4 3"/><line x1="396.5" y1="27.5" x2="396.5" y2="188.5" stroke="#808080" stroke-dasharray="4 3"/><line x1="414.5" y1="27.5" x2="414.5" y2="188.5" stroke="#808080" stroke-dasharray="4 3"/><line x1="432.5" y1="27.5" x2="432.5" y2="188.5" stroke="#808080" stroke-dasharray="4 3"/><line x1="450.5" y1="27.5" x2="450.5" y2="188.5" stroke="#808080" stroke-dasharray="4 3"/><line x1="469.5" y1="27.5" x2="469.5" y2="188.5" stroke="#808080" stroke-dasharray="4 3"/><line x1="487.5" y1="27.5" x2="487.5" y2="188.5" stroke="#808080" stroke-dasharray="4 3"/><line x1="51.0" y1="185.5" x2="506.0" y2="185.5" stroke="#808080" stroke-dasharray="4 3"/><line x1="51.0" y1="170.5" x2="506.0" y2="170.5" stroke="#808080" stroke-dasharray="4 3"/><line x1="51.0" y1="155.5" x2="506.0" y2="155.5" stroke="#808080" stroke-dasharray="4 3"/><line x1="51.0" y1="141.5" x2="506.0" y2="141.5" stroke="#808080" stroke-dasharray="4 3"/><line x1="51.0" y1="126.5" x2="506.0" y2="126.5" stroke="#808080" stroke-dasharray="4 3"/><line x1="51.0" y1="111.5" x2="506.0" y2="111.5" stroke="#808080" stroke-dasharray="4 3"/><line x1="51.0" y1="96.5" x2="506.0" y2="96.5" stroke="#808080" stroke-dasharray="4 3"/><line x1="51.0" y1="81.5" x2="506.0" y2="81.5" stroke="#808080" stroke-dasharray="4 3"/><line x1="51.0" y1="66.5" x2="506.0" y2="66.5" stroke="#808080" stroke-dasharray="4 3"/><line x1="51.0" y1="52.5" x2="506.0" y2="52.5" stroke="#808080" stroke-dasharray="4 3"/><line x1="51.0" y1="37.5" x2="506.0" y2="37.5" stroke="#808080" stroke-dasharray="4 3"/><line x1="506.0" y1="27.5" x2="506.0" y2="188.5" stroke="#000" stroke-dasharray="4 3"/><polygon points="43.0,35.5 51.0,27.5 51.0,188.5 43.0,196.0" fill="#ffff80" stroke="#000" stroke-width="1" shape-rendering="auto"/><rect x="42.0" y="35" width="2" height="162" fill="#000"/><polygon points="43.0,196.0 51.0,188.5 506.0,188.5 498.0,196.0" fill="#fff" stroke="#000" shape-rendering="auto"/><rect x="42.0" y="195" width="456.0" height="2" fill="#000"/><rect x="39" y="192" width="4" height="1" fill="#808080"/><text x="37" y="195.5" font-family="Liberation Sans" font-size="11" text-anchor="end" fill="#000" shape-rendering="auto">50</text><rect x="39" y="177" width="4" height="1" fill="#808080"/><text x="37" y="180.5" font-family="Liberation Sans" font-size="11" text-anchor="end" fill="#000" shape-rendering="auto">100</text><rect x="39" y="162" width="4" height="1" fill="#808080"/><text x="37" y="165.5" font-family="Liberation Sans" font-size="11" text-anchor="end" fill="#000" shape-rendering="auto">150</text><rect x="39" y="148" width="4" height="1" fill="#808080"/><text x="37" y="151.5" font-family="Liberation Sans" font-size="11" text-anchor="end" fill="#000" shape-rendering="auto">200</text><rect x="39" y="133" width="4" height="1" fill="#808080"/><text x="37" y="136.5" font-family="Liberation Sans" font-size="11" text-anchor="end" fill="#000" shape-rendering="auto">250</text><rect x="39" y="118" width="4" height="1" fill="#808080"/><text x="37" y="121.5" font-family="Liberation Sans" font-size="11" text-anchor="end" fill="#000" shape-rendering="auto">300</text><rect x="39" y="103" width="4" height="1" fill="#808080"/><text x="37" y="106.5" font-family="Liberation Sans" font-size="11" text-anchor="end" fill="#000" shape-rendering="auto">350</text><rect x="39" y="88" width="4" height="1" fill="#808080"/><text x="37" y="91.5" font-family="Liberation Sans" font-size="11" text-anchor="end" fill="#000" shape-rendering="auto">400</text><rect x="39" y="73" width="4" height="1" fill="#808080"/><text x="37" y="76.5" font-family="Liberation Sans" font-size="11" text-anchor="end" fill="#000" shape-rendering="auto">450</text><rect x="39" y="59" width="4" height="1" fill="#808080"/><text x="37" y="62.5" font-family="Liberation Sans" font-size="11" text-anchor="end" fill="#000" shape-rendering="auto">500</text><rect x="39" y="44" width="4" height="1" fill="#808080"/><text x="37" y="47.5" font-family="Liberation Sans" font-size="11" text-anchor="end" fill="#000" shape-rendering="auto">550</text><rect x="41" y="189" width="2" height="1" fill="#808080"/><rect x="41" y="186" width="2" height="1" fill="#808080"/><rect x="41" y="183" width="2" height="1" fill="#808080"/><rect x="41" y="180" width="2" height="1" fill="#808080"/><rect x="41" y="174" width="2" height="1" fill="#808080"/><rect x="41" y="171" width="2" height="1" fill="#808080"/><rect x="41" y="168" width="2" height="1" fill="#808080"/><rect x="41" y="165" width="2" height="1" fill="#808080"/><rect x="41" y="159" width="2" height="1" fill="#808080"/><rect x="41" y="156" width="2" height="1" fill="#808080"/><rect x="41" y="153" width="2" height="1" fill="#808080"/><rect x="41" y="151" width="2" height="1" fill="#808080"/><rect x="41" y="145" width="2" height="1" fill="#808080"/><rect x="41" y="142" width="2" height="1" fill="#808080"/><rect x="41" y="139" width="2" height="1" fill="#808080"/><rect x="41" y="136" width="2" height="1" fill="#808080"/><rect x="41" y="130" width="2" height="1" fill="#808080"/><rect x="41" y="127" width="2" height="1" fill="#808080"/><rect x="41" y="124" width="2" height="1" fill="#808080"/><rect x="41" y="121" width="2" height="1" fill="#808080"/><rect x="41" y="115" width="2" height="1" fill="#808080"/><rect x="41" y="112" width="2" height="1" fill="#808080"/><rect x="41" y="109" width="2" height="1" fill="#808080"/><rect x="41" y="106" width="2" height="1" fill="#808080"/><rect x="41" y="100" width="2" height="1" fill="#808080"/><rect x="41" y="97" width="2" height="1" fill="#808080"/><rect x="41" y="94" width="2" height="1" fill="#808080"/><rect x="41" y="91" width="2" height="1" fill="#808080"/><rect x="41" y="85" width="2" height="1" fill="#808080"/><rect x="41" y="82" width="2" height="1" fill="#808080"/><rect x="41" y="79" width="2" height="1" fill="#808080"/><rect x="41" y="76" width="2" height="1" fill="#808080"/><rect x="41" y="70" width="2" height="1" fill="#808080"/><rect x="41" y="68" width="2" height="1" fill="#808080"/><rect x="41" y="65" width="2" height="1" fill="#808080"/><rect x="41" y="62" width="2" height="1" fill="#808080"/><rect x="41" y="56" width="2" height="1" fill="#808080"/><rect x="41" y="53" width="2" height="1" fill="#808080"/><rect x="41" y="50" width="2" height="1" fill="#808080"/><rect x="41" y="47" width="2" height="1" fill="#808080"/><rect x="41" y="41" width="2" height="1" fill="#808080"/><rect x="41" y="38" width="2" height="1" fill="#808080"/><rect x="41" y="35" width="2" height="1" fill="#808080"/><rect x="47" y="197" width="1" height="2" fill="#808080"/><rect x="50" y="197" width="1" height="2" fill="#808080"/><rect x="54" y="197" width="1" height="2" fill="#808080"/><rect x="58" y="197" width="1" height="2" fill="#808080"/><rect x="65" y="197" width="1" height="2" fill="#808080"/><rect x="68" y="197" width="1" height="2" fill="#808080"/><rect x="72" y="197" width="1" height="2" fill="#808080"/><rect x="76" y="197" width="1" height="2" fill="#808080"/><rect x="83" y="197" width="1" height="2" fill="#808080"/><rect x="87" y="197" width="1" height="2" fill="#808080"/><rect x="90" y="197" width="1" height="2" fill="#808080"/><rect x="94" y="197" width="1" height="2" fill="#808080"/><rect x="101" y="197" width="1" height="2" fill="#808080"/><rect x="105" y="197" width="1" height="2" fill="#808080"/><rect x="109" y="197" width="1" height="2" fill="#808080"/><rect x="112" y="197" width="1" height="2" fill="#808080"/><rect x="119" y="197" width="1" height="2" fill="#808080"/><rect x="123" y="197" width="1" height="2" fill="#808080"/><rect x="127" y="197" width="1" height="2" fill="#808080"/><rect x="130" y="197" width="1" height="2" fill="#808080"/><rect x="138" y="197" width="1" height="2" fill="#808080"/><rect x="141" y="197" width="1" height="2" fill="#808080"/><rect x="145" y="197" width="1" height="2" fill="#808080"/><rect x="149" y="197" width="1" height="2" fill="#808080"/><rect x="156" y="197" width="1" height="2" fill="#808080"/><rect x="159" y="197" width="1" height="2" fill="#808080"/><rect x="163" y="197" width="1" height="2" fill="#808080"/><rect x="167" y="197" width="1" height="2" fill="#808080"/><rect x="174" y="197" width="1" height="2" fill="#808080"/><rect x="178" y="197" width="1" height="2" fill="#808080"/><rect x="181" y="197" width="1" height="2" fill="#808080"/><rect x="185" y="197" width="1" height="2" fill="#808080"/><rect x="192" y="197" width="1" height="2" fill="#808080"/><rect x="196" y="197" width="1" height="2" fill="#808080"/><rect x="200" y="197" width="1" height="2" fill="#808080"/><rect x="203" y="197" width="1" height="2" fill="#808080"/><rect x="210" y="197" width="1" height="2" fill="#808080"/><rect x="214" y="197" width="1" height="2" fill="#808080"/><rect x="218" y="197" width="1" height="2" fill="#808080"/><rect x="221" y="197" width="1" height="2" fill="#808080"/><rect x="229" y="197" width="1" height="2" fill="#808080"/><rect x="232" y="197" width="1" height="2" fill="#808080"/><rect x="236" y="197" width="1" height="2" fill="#808080"/><rect x="240" y="197" width="1" height="2" fill="#808080"/><rect x="247" y="197" width="1" height="2" fill="#808080"/><rect x="250" y="197" width="1" height="2" fill="#808080"/><rect x="254" y="197" width="1" height="2" fill="#808080"/><rect x="258" y="197" width="1" height="2" fill="#808080"/><rect x="265" y="197" width="1" height="2" fill="#808080"/><rect x="269" y="197" width="1" height="2" fill="#808080"/><rect x="272" y="197" width="1" height="2" fill="#808080"/><rect x="276" y="197" width="1" height="2" fill="#808080"/><rect x="283" y="197" width="1" height="2" fill="#808080"/><rect x="287" y="197" width="1" height="2" fill="#808080"/><rect x="291" y="197" width="1" height="2" fill="#808080"/><rect x="294" y="197" width="1" height="2" fill="#808080"/><rect x="301" y="197" width="1" height="2" fill="#808080"/><rect x="305" y="197" width="1" height="2" fill="#808080"/><rect x="309" y="197" width="1" height="2" fill="#808080"/><rect x="312" y="197" width="1" height="2" fill="#808080"/><rect x="320" y="197" width="1" height="2" fill="#808080"/><rect x="323" y="197" width="1" height="2" fill="#808080"/><rect x="327" y="197" width="1" height="2" fill="#808080"/><rect x="331" y="197" width="1" height="2" fill="#808080"/><rect x="338" y="197" width="1" height="2" fill="#808080"/><rect x="341" y="197" width="1" height="2" fill="#808080"/><rect x="345" y="197" width="1" height="2" fill="#808080"/><rect x="349" y="197" width="1" height="2" fill="#808080"/><rect x="356" y="197" width="1" height="2" fill="#808080"/><rect x="360" y="197" width="1" height="2" fill="#808080"/><rect x="363" y="197" width="1" height="2" fill="#808080"/><rect x="367" y="197" width="1" height="2" fill="#808080"/><rect x="374" y="197" width="1" height="2" fill="#808080"/><rect x="378" y="197" width="1" height="2" fill="#808080"/><rect x="382" y="197" width="1" height="2" fill="#808080"/><rect x="385" y="197" width="1" height="2" fill="#808080"/><rect x="392" y="197" width="1" height="2" fill="#808080"/><rect x="396" y="197" width="1" height="2" fill="#808080"/><rect x="400" y="197" width="1" height="2" fill="#808080"/><rect x="403" y="197" width="1" height="2" fill="#808080"/><rect x="411" y="197" width="1" height="2" fill="#808080"/><rect x="414" y="197" width="1" height="2" fill="#808080"/><rect x="418" y="197" width="1" height="2" fill="#808080"/><rect x="422" y="197" width="1" height="2" fill="#808080"/><rect x="429" y="197" width="1" height="2" fill="#808080"/><rect x="432" y="197" width="1" height="2" fill="#808080"/><rect x="436" y="197" width="1" height="2" fill="#808080"/><rect x="440" y="197" width="1" height="2" fill="#808080"/><rect x="447" y="197" width="1" height="2" fill="#808080"/><rect x="451" y="197" width="1" height="2" fill="#808080"/><rect x="454" y="197" width="1" height="2" fill="#808080"/><rect x="458" y="197" width="1" height="2" fill="#808080"/><rect x="465" y="197" width="1" height="2" fill="#808080"/><rect x="469" y="197" width="1" height="2" fill="#808080"/><rect x="473" y="197" width="1" height="2" fill="#808080"/><rect x="476" y="197" width="1" height="2" fill="#808080"/><rect x="483" y="197" width="1" height="2" fill="#808080"/><rect x="487" y="197" width="1" height="2" fill="#808080"/><rect x="491" y="197" width="1" height="2" fill="#808080"/><rect x="494" y="197" width="1" height="2" fill="#808080"/><rect x="43" y="197" width="1" height="4" fill="#808080"/><text x="43" y="213" font-family="Liberation Sans" font-size="11" text-anchor="middle" fill="#000" shape-rendering="auto">0</text><rect x="61" y="197" width="1" height="4" fill="#808080"/><text x="61" y="213" font-family="Liberation Sans" font-size="11" text-anchor="middle" fill="#000" shape-rendering="auto">1</text><rect x="79" y="197" width="1" height="4" fill="#808080"/><text x="79" y="213" font-family="Liberation Sans" font-size="11" text-anchor="middle" fill="#000" shape-rendering="auto">2</text><rect x="98" y="197" width="1" height="4" fill="#808080"/><text x="98" y="213" font-family="Liberation Sans" font-size="11" text-anchor="middle" fill="#000" shape-rendering="auto">3</text><rect x="116" y="197" width="1" height="4" fill="#808080"/><text x="116" y="213" font-family="Liberation Sans" font-size="11" text-anchor="middle" fill="#000" shape-rendering="auto">4</text><rect x="134" y="197" width="1" height="4" fill="#808080"/><text x="134" y="213" font-family="Liberation Sans" font-size="11" text-anchor="middle" fill="#000" shape-rendering="auto">5</text><rect x="152" y="197" width="1" height="4" fill="#808080"/><text x="152" y="213" font-family="Liberation Sans" font-size="11" text-anchor="middle" fill="#000" shape-rendering="auto">6</text><rect x="170" y="197" width="1" height="4" fill="#808080"/><text x="170" y="213" font-family="Liberation Sans" font-size="11" text-anchor="middle" fill="#000" shape-rendering="auto">7</text><rect x="189" y="197" width="1" height="4" fill="#808080"/><text x="189" y="213" font-family="Liberation Sans" font-size="11" text-anchor="middle" fill="#000" shape-rendering="auto">8</text><rect x="207" y="197" width="1" height="4" fill="#808080"/><text x="207" y="213" font-family="Liberation Sans" font-size="11" text-anchor="middle" fill="#000" shape-rendering="auto">9</text><rect x="225" y="197" width="1" height="4" fill="#808080"/><text x="225" y="213" font-family="Liberation Sans" font-size="11" text-anchor="middle" fill="#000" shape-rendering="auto">10</text><rect x="243" y="197" width="1" height="4" fill="#808080"/><text x="243" y="213" font-family="Liberation Sans" font-size="11" text-anchor="middle" fill="#000" shape-rendering="auto">11</text><rect x="261" y="197" width="1" height="4" fill="#808080"/><text x="261" y="213" font-family="Liberation Sans" font-size="11" text-anchor="middle" fill="#000" shape-rendering="auto">12</text><rect x="280" y="197" width="1" height="4" fill="#808080"/><text x="280" y="213" font-family="Liberation Sans" font-size="11" text-anchor="middle" fill="#000" shape-rendering="auto">13</text><rect x="298" y="197" width="1" height="4" fill="#808080"/><text x="298" y="213" font-family="Liberation Sans" font-size="11" text-anchor="middle" fill="#000" shape-rendering="auto">14</text><rect x="316" y="197" width="1" height="4" fill="#808080"/><text x="316" y="213" font-family="Liberation Sans" font-size="11" text-anchor="middle" fill="#000" shape-rendering="auto">15</text><rect x="334" y="197" width="1" height="4" fill="#808080"/><text x="334" y="213" font-family="Liberation Sans" font-size="11" text-anchor="middle" fill="#000" shape-rendering="auto">16</text><rect x="352" y="197" width="1" height="4" fill="#808080"/><text x="352" y="213" font-family="Liberation Sans" font-size="11" text-anchor="middle" fill="#000" shape-rendering="auto">17</text><rect x="371" y="197" width="1" height="4" fill="#808080"/><text x="371" y="213" font-family="Liberation Sans" font-size="11" text-anchor="middle" fill="#000" shape-rendering="auto">18</text><rect x="389" y="197" width="1" height="4" fill="#808080"/><text x="389" y="213" font-family="Liberation Sans" font-size="11" text-anchor="middle" fill="#000" shape-rendering="auto">19</text><rect x="407" y="197" width="1" height="4" fill="#808080"/><text x="407" y="213" font-family="Liberation Sans" font-size="11" text-anchor="middle" fill="#000" shape-rendering="auto">20</text><rect x="425" y="197" width="1" height="4" fill="#808080"/><text x="425" y="213" font-family="Liberation Sans" font-size="11" text-anchor="middle" fill="#000" shape-rendering="auto">21</text><rect x="443" y="197" width="1" height="4" fill="#808080"/><text x="443" y="213" font-family="Liberation Sans" font-size="11" text-anchor="middle" fill="#000" shape-rendering="auto">22</text><rect x="462" y="197" width="1" height="4" fill="#808080"/><text x="462" y="213" font-family="Liberation Sans" font-size="11" text-anchor="middle" fill="#000" shape-rendering="auto">23</text><rect x="480" y="197" width="1" height="4" fill="#808080"/><text x="480" y="213" font-family="Liberation Sans" font-size="11" text-anchor="middle" fill="#000" shape-rendering="auto">24</text><rect x="498" y="197" width="1" height="4" fill="#808080"/><text x="498" y="213" font-family="Liberation Sans" font-size="11" text-anchor="middle" fill="#000" shape-rendering="auto">25</text><polygon points="43.0,55.0 61.2,75.0 69.2,67.0 51.0,47.0" fill="#ff0000" stroke="#000" stroke-width="0.8" stroke-linejoin="round" shape-rendering="auto"/><polygon points="61.2,75.0 79.4,47.3 87.4,39.3 69.2,67.0" fill="#ff0000" stroke="#000" stroke-width="0.8" stroke-linejoin="round" shape-rendering="auto"/><polygon points="79.4,47.3 97.6,36.0 105.6,28.0 87.4,39.3" fill="#ff0000" stroke="#000" stroke-width="0.8" stroke-linejoin="round" shape-rendering="auto"/><polygon points="97.6,36.0 115.8,66.0 123.8,58.0 105.6,28.0" fill="#ff0000" stroke="#000" stroke-width="0.8" stroke-linejoin="round" shape-rendering="auto"/><polygon points="115.8,66.0 134.0,64.3 142.0,56.3 123.8,58.0" fill="#ff0000" stroke="#000" stroke-width="0.8" stroke-linejoin="round" shape-rendering="auto"/><polygon points="134.0,64.3 152.2,80.0 160.2,72.0 142.0,56.3" fill="#ff0000" stroke="#000" stroke-width="0.8" stroke-linejoin="round" shape-rendering="auto"/><polygon points="152.2,80.0 170.4,79.8 178.4,71.8 160.2,72.0" fill="#ff0000" stroke="#000" stroke-width="0.8" stroke-linejoin="round" shape-rendering="auto"/><polygon points="170.4,79.8 188.6,89.0 196.6,81.0 178.4,71.8" fill="#ff0000" stroke="#000" stroke-width="0.8" stroke-linejoin="round" shape-rendering="auto"/><polygon points="188.6,89.0 206.8,105.2 214.8,97.2 196.6,81.0" fill="#ff0000" stroke="#000" stroke-width="0.8" stroke-linejoin="round" shape-rendering="auto"/><polygon points="206.8,105.2 225.0,95.8 233.0,87.8 214.8,97.2" fill="#ff0000" stroke="#000" stroke-width="0.8" stroke-linejoin="round" shape-rendering="auto"/><polygon points="225.0,95.8 243.2,129.3 251.2,121.3 233.0,87.8" fill="#ff0000" stroke="#000" stroke-width="0.8" stroke-linejoin="round" shape-rendering="auto"/><polygon points="243.2,129.3 261.4,122.0 269.4,114.0 251.2,121.3" fill="#ff0000" stroke="#000" stroke-width="0.8" stroke-linejoin="round" shape-rendering="auto"/><polygon points="261.4,122.0 279.6,105.8 287.6,97.8 269.4,114.0" fill="#ff0000" stroke="#000" stroke-width="0.8" stroke-linejoin="round" shape-rendering="auto"/><polygon points="279.6,105.8 297.8,130.0 305.8,122.0 287.6,97.8" fill="#ff0000" stroke="#000" stroke-width="0.8" stroke-linejoin="round" shape-rendering="auto"/><polygon points="297.8,130.0 316.0,159.0 324.0,151.0 305.8,122.0" fill="#ff0000" stroke="#000" stroke-width="0.8" stroke-linejoin="round" shape-rendering="auto"/><polygon points="316.0,159.0 334.2,157.0 342.2,149.0 324.0,151.0" fill="#ff0000" stroke="#000" stroke-width="0.8" stroke-linejoin="round" shape-rendering="auto"/><polygon points="334.2,157.0 352.4,182.0 360.4,174.0 342.2,149.0" fill="#ff0000" stroke="#000" stroke-width="0.8" stroke-linejoin="round" shape-rendering="auto"/><polygon points="352.4,182.0 370.6,172.0 378.6,164.0 360.4,174.0" fill="#ff0000" stroke="#000" stroke-width="0.8" stroke-linejoin="round" shape-rendering="auto"/><text x="260" y="20" font-family="Liberation Sans" font-size="11" text-anchor="middle" fill="#0000ff" shape-rendering="auto">Скорость машины</text></svg><div style="left:202px;top:296px;width:5px;height:5px;background:#000;"></div><div style="left:462px;top:296px;width:5px;height:5px;background:#000;"></div><div style="left:722px;top:296px;width:5px;height:5px;background:#000;"></div><div style="left:202px;top:408px;width:5px;height:5px;background:#000;"></div><div style="left:722px;top:408px;width:5px;height:5px;background:#000;"></div><div style="left:202px;top:520px;width:5px;height:5px;background:#000;"></div><div style="left:462px;top:520px;width:5px;height:5px;background:#000;"></div><div style="left:722px;top:520px;width:5px;height:5px;background:#000;"></div><div class="btn" style="left:204px;top:538px;width:97px;height:25px;"></div><svg style="left:214px;top:541px;shape-rendering:auto" width="18" height="20" viewBox="0 0 18 20" shape-rendering="crispEdges"><path d="M2 10 L6 14 L15 3" fill="none" stroke="#00b000" stroke-width="3" /><path d="M2 11.5 L6 15.5 L15 4.5" fill="none" stroke="#000080" stroke-width="1" /></svg><span style="left:236.4px;top:544px;font-size:11px;letter-spacing:-0.020px;"><u>В</u>ыполнить</span><div class="btn" style="left:316px;top:538px;width:97px;height:25px;"></div><svg style="left:331px;top:541px;shape-rendering:auto" width="18" height="20" viewBox="0 0 18 20" shape-rendering="crispEdges"><path d="M3.5 4 L13.5 15 M13.5 4 L3.5 15" fill="none" stroke="#c00000" stroke-width="3.6" /><path d="M5 6.5 L14.5 16.5 M4.5 16 L8 12" fill="none" stroke="#700000" stroke-width="1.2" /></svg><span style="left:352px;top:544px;font-size:11px;letter-spacing:-0.110px;"><u>О</u>чистить</span><div class="btn" style="left:428px;top:538px;width:97px;height:25px;"></div><svg style="left:440px;top:541px;shape-rendering:auto" width="18" height="20" viewBox="0 0 18 20" shape-rendering="crispEdges"><circle cx="9" cy="3.2" r="2.2" fill="#20e020" stroke="#006000" stroke-width=".8"/><path d="M9.5 6 L7.5 11.5 L11.5 14 L12.5 18.5 M7.5 11.5 L5.5 15 L2.5 18.5 M8.5 7 L4.5 8.5 L3 11 M10 7 L12.5 9.5 L14.5 9.5" fill="none" stroke="#0040c0" stroke-width="3.6" stroke-linecap="round" stroke-linejoin="round"/><path d="M9.5 6 L7.5 11.5 L11.5 14 L12.5 18.5 M7.5 11.5 L5.5 15 L2.5 18.5 M8.5 7 L4.5 8.5 L3 11 M10 7 L12.5 9.5 L14.5 9.5" fill="none" stroke="#20e020" stroke-width="2.2" stroke-linecap="round" stroke-linejoin="round"/></svg><span style="left:462.5px;top:544px;font-size:11px;letter-spacing:0.277px;"><u>К</u>опировать</span>
<!-- p_dialog -->
<div class="win" style="left:512px;top:337px;width:431px;height:345px;"></div><div style="left:515px;top:340px;width:425px;height:18px;background:linear-gradient(90deg,#0a246a,#a6caf0);"></div><span style="left:517px;top:342px;font-size:12px;letter-spacing:-0.357px;font-weight:bold;color:#fff;line-height:14px;">Editing Chart1</span><div class="btn" style="left:904px;top:342px;width:16px;height:14px;"><svg style="left:0px;top:0px;" width="16" height="14" viewBox="0 0 16 14" shape-rendering="crispEdges"><text x="8" y="11" font-family="Liberation Sans" font-weight="bold" font-size="12" text-anchor="middle" fill="#000">?</text></svg></div><div class="btn" style="left:922px;top:342px;width:16px;height:14px;"><svg style="left:0px;top:0px;" width="16" height="14" viewBox="0 0 16 14" shape-rendering="crispEdges"><path d="M4 3h2v1h1v1h2v-1h1v-1h2v1h-1v1h-1v1h-1v1h1v1h1v1h1v1h-2v-1h-1v-1h-2v1h-1v1h-2v-1h1v-1h1v-1h1v-1h-1v-1h-1v-1h-1z" fill="#000" stroke="none" stroke-width="1" /></svg></div><div class="face" style="left:515px;top:379px;width:425px;height:269px;box-shadow:inset 1px 1px #fff,inset -1px -1px #404040,inset -2px -2px #808080;"></div><div class="face" style="left:561px;top:361px;width:40px;height:18px;"></div><div style="left:561px;top:363px;width:1px;height:16px;background:#fff;"></div><div style="left:562px;top:362px;width:1px;height:1px;background:#fff;"></div><div style="left:563px;top:361px;width:36px;height:1px;background:#fff;"></div><div style="left:599px;top:363px;width:1px;height:16px;background:#808080;"></div><div style="left:600px;top:363px;width:1px;height:16px;background:#404040;"></div><div style="left:599px;top:362px;width:1px;height:1px;background:#404040;"></div><span style="left:565.6px;top:365px;font-size:11px;letter-spacing:-0.430px;">Series</span><div class="face" style="left:515px;top:359px;width:46px;height:21px;"></div><div style="left:515px;top:361px;width:1px;height:19px;background:#fff;"></div><div style="left:516px;top:360px;width:1px;height:1px;background:#fff;"></div><div style="left:517px;top:359px;width:42px;height:1px;background:#fff;"></div><div style="left:559px;top:361px;width:1px;height:19px;background:#808080;"></div><div style="left:560px;top:361px;width:1px;height:19px;background:#404040;"></div><div style="left:559px;top:360px;width:1px;height:1px;background:#404040;"></div><span style="left:523.6px;top:363px;font-size:11px;letter-spacing:-0.500px;">Chart</span><div class="face" style="left:516px;top:379px;width:43px;height:2px;"></div><div style="left:518px;top:362px;width:40px;height:16px;border:1px dotted #000;"></div><div class="face" style="left:519px;top:403px;width:417px;height:241px;box-shadow:inset 1px 1px #fff,inset -1px -1px #404040,inset -2px -2px #808080;"></div><div class="face" style="left:565px;top:385px;width:47px;height:18px;"></div><div style="left:565px;top:387px;width:1px;height:16px;background:#fff;"></div><div style="left:566px;top:386px;width:1px;height:1px;background:#fff;"></div><div style="left:567px;top:385px;width:43px;height:1px;background:#fff;"></div><div style="left:610px;top:387px;width:1px;height:16px;background:#808080;"></div><div style="left:611px;top:387px;width:1px;height:16px;background:#404040;"></div><div style="left:610px;top:386px;width:1px;height:1px;background:#404040;"></div><span style="left:569.5px;top:389px;font-size:11px;letter-spacing:-0.376px;">General</span><div class="face" style="left:612px;top:385px;width:42px;height:18px;"></div><div style="left:612px;top:387px;width:1px;height:16px;background:#fff;"></div><div style="left:613px;top:386px;width:1px;height:1px;background:#fff;"></div><div style="left:614px;top:385px;width:38px;height:1px;background:#fff;"></div><div style="left:652px;top:387px;width:1px;height:16px;background:#808080;"></div><div style="left:653px;top:387px;width:1px;height:16px;background:#404040;"></div><div style="left:652px;top:386px;width:1px;height:1px;background:#404040;"></div><span style="left:618px;top:389px;font-size:11px;letter-spacing:-0.370px;">Axis</span><div class="face" style="left:654px;top:385px;width:42px;height:18px;"></div><div style="left:654px;top:387px;width:1px;height:16px;background:#fff;"></div><div style="left:655px;top:386px;width:1px;height:1px;background:#fff;"></div><div style="left:656px;top:385px;width:38px;height:1px;background:#fff;"></div><div style="left:694px;top:387px;width:1px;height:16px;background:#808080;"></div><div style="left:695px;top:387px;width:1px;height:16px;background:#404040;"></div><div style="left:694px;top:386px;width:1px;height:1px;background:#404040;"></div><span style="left:661.3px;top:389px;font-size:11px;letter-spacing:-0.312px;">Titles</span><div class="face" style="left:696px;top:385px;width:48px;height:18px;"></div><div style="left:696px;top:387px;width:1px;height:16px;background:#fff;"></div><div style="left:697px;top:386px;width:1px;height:1px;background:#fff;"></div><div style="left:698px;top:385px;width:44px;height:1px;background:#fff;"></div><div style="left:742px;top:387px;width:1px;height:16px;background:#808080;"></div><div style="left:743px;top:387px;width:1px;height:16px;background:#404040;"></div><div style="left:742px;top:386px;width:1px;height:1px;background:#404040;"></div><span style="left:701.8px;top:389px;font-size:11px;letter-spacing:-0.034px;">Legend</span><div class="face" style="left:744px;top:385px;width:42px;height:18px;"></div><div style="left:744px;top:387px;width:1px;height:16px;background:#fff;"></div><div style="left:745px;top:386px;width:1px;height:1px;background:#fff;"></div><div style="left:746px;top:385px;width:38px;height:1px;background:#fff;"></div><div style="left:784px;top:387px;width:1px;height:16px;background:#808080;"></div><div style="left:785px;top:387px;width:1px;height:16px;background:#404040;"></div><div style="left:784px;top:386px;width:1px;height:1px;background:#404040;"></div><span style="left:750.2px;top:389px;font-size:11px;letter-spacing:-0.127px;">Panel</span><div class="face" style="left:786px;top:385px;width:45px;height:18px;"></div><div style="left:786px;top:387px;width:1px;height:16px;background:#fff;"></div><div style="left:787px;top:386px;width:1px;height:1px;background:#fff;"></div><div style="left:788px;top:385px;width:41px;height:1px;background:#fff;"></div><div style="left:829px;top:387px;width:1px;height:16px;background:#808080;"></div><div style="left:830px;top:387px;width:1px;height:16px;background:#404040;"></div><div style="left:829px;top:386px;width:1px;height:1px;background:#404040;"></div><span style="left:792.7px;top:389px;font-size:11px;letter-spacing:-0.325px;">Paging</span><div class="face" style="left:831px;top:385px;width:42px;height:18px;"></div><div style="left:831px;top:387px;width:1px;height:16px;background:#fff;"></div><div style="left:832px;top:386px;width:1px;height:1px;background:#fff;"></div><div style="left:833px;top:385px;width:38px;height:1px;background:#fff;"></div><div style="left:871px;top:387px;width:1px;height:16px;background:#808080;"></div><div style="left:872px;top:387px;width:1px;height:16px;background:#404040;"></div><div style="left:871px;top:386px;width:1px;height:1px;background:#404040;"></div><span style="left:836.8px;top:389px;font-size:11px;letter-spacing:-0.056px;">Walls</span><div class="face" style="left:873px;top:385px;width:42px;height:18px;"></div><div style="left:873px;top:387px;width:1px;height:16px;background:#fff;"></div><div style="left:874px;top:386px;width:1px;height:1px;background:#fff;"></div><div style="left:875px;top:385px;width:38px;height:1px;background:#fff;"></div><div style="left:913px;top:387px;width:1px;height:16px;background:#808080;"></div><div style="left:914px;top:387px;width:1px;height:16px;background:#404040;"></div><div style="left:913px;top:386px;width:1px;height:1px;background:#404040;"></div><span style="left:879.4px;top:389px;font-size:11px;letter-spacing:-0.531px;">3D</span><div class="face" style="left:519px;top:383px;width:46px;height:21px;"></div><div style="left:519px;top:385px;width:1px;height:19px;background:#fff;"></div><div style="left:520px;top:384px;width:1px;height:1px;background:#fff;"></div><div style="left:521px;top:383px;width:42px;height:1px;background:#fff;"></div><div style="left:563px;top:385px;width:1px;height:19px;background:#808080;"></div><div style="left:564px;top:385px;width:1px;height:19px;background:#404040;"></div><div style="left:563px;top:384px;width:1px;height:1px;background:#404040;"></div><span style="left:527.3px;top:387px;font-size:11px;letter-spacing:-0.413px;">Series</span><div class="face" style="left:520px;top:403px;width:43px;height:2px;"></div><div class="btn" style="left:532px;top:418px;width:26px;height:17px;"></div><div class="btn" style="left:558px;top:418px;width:16px;height:17px;"></div><div class="btn" style="left:574px;top:418px;width:26px;height:17px;"></div><div class="btn" style="left:600px;top:418px;width:216px;height:17px;"></div><span style="left:606px;top:420px;font-size:11px;letter-spacing:-0.201px;">Series Title</span><div class="sunk" style="left:531px;top:434px;width:285px;height:188px;background:#fff;"></div><div style="left:597px;top:436px;width:217px;height:27px;background:#0a246a;"></div><span style="left:601.8px;top:443px;font-size:11px;letter-spacing:-0.571px;color:#fff;">Series1</span><svg style="left:533px;top:439px;" width="22" height="21" viewBox="0 0 22 21" shape-rendering="crispEdges"><rect x="3" y="2" width="1" height="17" fill="#000" /><rect x="3" y="18" width="18" height="1" fill="#000" /><rect x="2" y="3" width="1" height="1" fill="#000" /><rect x="2" y="5" width="1" height="1" fill="#000" /><rect x="2" y="7" width="1" height="1" fill="#000" /><rect x="2" y="9" width="1" height="1" fill="#000" /><rect x="2" y="11" width="1" height="1" fill="#000" /><rect x="2" y="13" width="1" height="1" fill="#000" /><rect x="2" y="15" width="1" height="1" fill="#000" /><rect x="2" y="17" width="1" height="1" fill="#000" /><rect x="5" y="19" width="1" height="1" fill="#000" /><rect x="7" y="19" width="1" height="1" fill="#000" /><rect x="9" y="19" width="1" height="1" fill="#000" /><rect x="11" y="19" width="1" height="1" fill="#000" /><rect x="13" y="19" width="1" height="1" fill="#000" /><rect x="15" y="19" width="1" height="1" fill="#000" /><rect x="17" y="19" width="1" height="1" fill="#000" /><rect x="19" y="19" width="1" height="1" fill="#000" /><path d="M4 12.5 L11.5 5.5 H13.5 L14.5 8.5 H18 L20.5 13.5" fill="none" stroke="#0000ff" stroke-width="1.1" shape-rendering="auto"/><path d="M4 8.5 L7.5 12.5 L11.5 8.5 L14.5 16.5 L20.5 6.5" fill="none" stroke="#ff0000" stroke-width="1.1" shape-rendering="auto"/></svg><div class="sunk" style="left:559px;top:442px;width:12px;height:12px;background:#fff;"><svg style="left:0px;top:0px;" width="12" height="12" viewBox="0 0 12 12" shape-rendering="crispEdges"><path d="M2.5 5 L4.5 7 L9 2.5 V5 L4.5 9.5 L2.5 7.5 Z" fill="#000" stroke="none" stroke-width="1" shape-rendering="auto"/></svg></div><div style="left:577px;top:440px;width:18px;height:19px;background:#ff0000;border:1px solid #000;"></div><div class="btn" style="left:834px;top:430px;width:27px;height:25px;"><svg style="left:0px;top:0px;" width="27" height="25" viewBox="0 0 27 25" shape-rendering="crispEdges"><path d="M13.5 6.5 l-5 6 h3 v5 h5 v-5 h3 z" fill="none" stroke="#fff" stroke-width="1" transform="translate(1 1)"/><path d="M13.5 6.5 l-5 6 h3 v5 h5 v-5 h3 z" fill="none" stroke="#808080" stroke-width="1" /></svg></div><div class="btn" style="left:882px;top:430px;width:27px;height:25px;"><svg style="left:0px;top:0px;" width="27" height="25" viewBox="0 0 27 25" shape-rendering="crispEdges"><path d="M11 6.5 h5 v5 h3 l-5 6 M11 6.5 v5 h-3" fill="none" stroke="#fff" stroke-width="1" transform="translate(1 1)"/><path d="M11 6.5 h5 v5 h3 l-5 6 M11 6.5 v5 h-3" fill="none" stroke="#808080" stroke-width="1" /></svg></div><div class="btn" style="left:834px;top:466px;width:75px;height:25px;"></div><span style="left:857.3px;top:472px;font-size:11px;letter-spacing:-0.223px;"><u>A</u>dd...</span><div class="btn" style="left:834px;top:499px;width:75px;height:25px;"></div><span style="left:855.2px;top:505px;font-size:11px;letter-spacing:-0.033px;"><u>D</u>elete</span><div class="btn" style="left:834px;top:532px;width:75px;height:25px;"></div><span style="left:857.15px;top:538px;font-size:11px;letter-spacing:-0.230px;"><u>T</u>itle...</span><div class="btn" style="left:834px;top:565px;width:75px;height:25px;"></div><span style="left:857.4px;top:571px;font-size:11px;letter-spacing:-0.308px;">C<u>l</u>one</span><div class="btn" style="left:834px;top:598px;width:75px;height:25px;"></div><span style="left:848.0px;top:604px;font-size:11px;letter-spacing:-0.189px;"><u>C</u>hange...</span><div class="btn" style="left:546px;top:651px;width:75px;height:25px;"></div><span style="left:567.75px;top:657px;font-size:11px;letter-spacing:-0.185px;"><u>H</u>elp...</span><div style="left:834px;top:651px;width:75px;height:25px;background:#000;"></div><div class="btn" style="left:835px;top:652px;width:73px;height:23px;"></div><span style="left:858.15px;top:657px;font-size:11px;letter-spacing:-0.485px;">Close</span>
<!-- p_ide -->
<div class="win" style="left:0px;top:0px;width:1024px;height:105px;"></div><div style="left:4px;top:4px;width:1016px;height:18px;background:linear-gradient(90deg,#808080,#c0c0c0);"></div><svg style="left:6px;top:5px;" width="16" height="16" viewBox="0 0 16 16" shape-rendering="crispEdges"><rect x="0" y="2" width="4" height="7" fill="#0020e0" /><rect x="0" y="2" width="4" height="1" fill="#2060d0" /><rect x="1" y="3" width="1" height="1" fill="#ffe000" /><rect x="1" y="5" width="1" height="1" fill="#ffe000" /><rect x="4" y="0" width="5" height="8" fill="#0000ff" /><rect x="4" y="0" width="5" height="1" fill="#20a0e0" /><rect x="8" y="1" width="1" height="3" fill="#000080" /><rect x="5" y="1" width="1" height="2" fill="#ffe000" /><rect x="7" y="1" width="1" height="2" fill="#ffe000" /><rect x="12" y="2" width="4" height="9" fill="#000080" /><rect x="14" y="3" width="1" height="1" fill="#ffe000" /><rect x="14" y="5" width="1" height="1" fill="#ffe000" /><rect x="14" y="7" width="1" height="1" fill="#ffe000" /><rect x="8" y="3" width="5" height="8" fill="#0000ff" /><rect x="8" y="3" width="5" height="1" fill="#20a0e0" /><rect x="9" y="4" width="1" height="1" fill="#ffe000" /><rect x="11" y="4" width="1" height="1" fill="#ffe000" /><rect x="9" y="6" width="1" height="1" fill="#ffe000" /><rect x="11" y="6" width="1" height="1" fill="#ffe000" /><rect x="11" y="8" width="1" height="1" fill="#ffe000" /><path d="M0 8 Q0 7 2 7 H7 L8 9 H16 V13 Q16 14.5 14 14.5 H8 L7 16 H3 Q0 16 0 13 Z" fill="#0030c0" shape-rendering="auto"/><path d="M6.2 8.2 H4 Q2 8.2 2 10.5 V12.5 Q2 15 4 15 H6.2" fill="none" stroke="#ffd000" stroke-width="1.7" shape-rendering="auto"/><path d="M8.5 9.6 L9.3 10.7 L10.4 11.5 L9.3 12.3 L8.5 13.4 L7.7 12.3 L6.6 11.5 L7.7 10.7 Z M13.5 9.6 L14.3 10.7 L15.4 11.5 L14.3 12.3 L13.5 13.4 L12.7 12.3 L11.6 11.5 L12.7 10.7 Z" fill="#ffd000" shape-rendering="auto"/></svg><span style="left:24px;top:6px;font-size:12px;letter-spacing:-0.071px;font-weight:bold;color:#d4d0c8;line-height:14px;">C++Builder 6 - lr011p [Running] [Built: 0,59 secs]</span><div class="btn" style="left:968px;top:6px;width:16px;height:14px;"><svg style="left:0px;top:0px;" width="16" height="14" viewBox="0 0 16 14" shape-rendering="crispEdges"><rect x="4" y="9" width="6" height="2" fill="#000" /></svg></div><div class="btn" style="left:984px;top:6px;width:16px;height:14px;"><svg style="left:0px;top:0px;" width="16" height="14" viewBox="0 0 16 14" shape-rendering="crispEdges"><rect x="3.5" y="3.5" width="8" height="7" fill="none" stroke="#000"/><rect x="3" y="2" width="9" height="2" fill="#000" /></svg></div><div class="btn" style="left:1002px;top:6px;width:16px;height:14px;"><svg style="left:0px;top:0px;" width="16" height="14" viewBox="0 0 16 14" shape-rendering="crispEdges"><path d="M4 3h2v1h1v1h2v-1h1v-1h2v1h-1v1h-1v1h-1v1h1v1h1v1h1v1h-2v-1h-1v-1h-2v1h-1v1h-2v-1h1v-1h1v-1h1v-1h-1v-1h-1v-1h-1z" fill="#000" stroke="none" stroke-width="1" /></svg></div><div style="left:4px;top:23px;width:462px;height:26px;box-shadow:inset 1px 1px #fff,inset -1px -1px #808080;"></div><div style="left:7px;top:26px;width:3px;height:20px;box-shadow:inset 1px 1px #fff,inset -1px -1px #808080;"></div><span style="left:19.5px;top:31px;font-size:11px;letter-spacing:-0.556px;"><u>F</u>ile</span><span style="left:46.5px;top:31px;font-size:11px;letter-spacing:-0.426px;"><u>E</u>dit</span><span style="left:75.75px;top:31px;font-size:11px;letter-spacing:-0.434px;"><u>S</u>earch</span><span style="left:119.5px;top:31px;font-size:11px;letter-spacing:-0.473px;"><u>V</u>iew</span><span style="left:152.5px;top:31px;font-size:11px;letter-spacing:-0.069px;"><u>P</u>roject</span><span style="left:197.5px;top:31px;font-size:11px;letter-spacing:-0.393px;"><u>R</u>un</span><span style="left:227px;top:31px;font-size:11px;letter-spacing:-0.180px;"><u>C</u>omponent</span><span style="left:293.5px;top:31px;font-size:11px;letter-spacing:-0.167px;"><u>D</u>atabase</span><span style="left:351px;top:31px;font-size:11px;letter-spacing:-0.386px;"><u>T</u>ools</span><span style="left:386.75px;top:31px;font-size:11px;letter-spacing:-0.312px;"><u>W</u>indow</span><span style="left:435.5px;top:31px;font-size:11px;letter-spacing:-0.531px;"><u>H</u>elp</span><div style="left:466px;top:23px;width:198px;height:26px;box-shadow:inset 1px 1px #fff,inset -1px -1px #808080;"></div><div style="left:469px;top:26px;width:3px;height:20px;box-shadow:inset 1px 1px #fff,inset -1px -1px #808080;"></div><div class="sunk" style="left:476px;top:25px;width:129px;height:21px;background:#fff;"></div><span style="left:479.5px;top:29px;font-size:11px;letter-spacing:-0.291px;">&lt;None&gt;</span><div class="btn" style="left:587px;top:27px;width:16px;height:17px;"><svg style="left:0px;top:0px;" width="16" height="17" viewBox="0 0 16 17" shape-rendering="crispEdges"><path d="M4 7 h7 l-3.5 4 z" fill="#000" stroke="none" stroke-width="1" /></svg></div><div style="left:610px;top:27px;width:1px;height:18px;background:#808080;"></div><div style="left:611px;top:27px;width:1px;height:18px;background:#fff;"></div><svg style="left:619px;top:27px;" width="16" height="16" viewBox="0 0 16 16" shape-rendering="crispEdges"><rect x="1.5" y="2.5" width="7" height="6" fill="#fff" stroke="#000"/><rect x="4.5" y="0.5" width="7" height="6" fill="#fff" stroke="#000"/><path d="M13.5 1 v6 M12 5.5 l1.5 2 l1.5 -2" fill="none" stroke="#000" stroke-width="1" /><rect x="6.5" y="10.5" width="9" height="4" fill="#d4d0c8" stroke="#000"/><rect x="8" y="12" width="2" height="1" fill="#c00000" /></svg><svg style="left:643px;top:27px;" width="16" height="16" viewBox="0 0 16 16" shape-rendering="crispEdges"><rect x="1.5" y="4.5" width="8" height="7" fill="#d4d0c8" stroke="#808080"/><rect x="4.5" y="1.5" width="8" height="7" fill="#d4d0c8" stroke="#808080"/><path d="M10 9 l5 5 l-5 3 z" fill="#a0a0a0" stroke="none" stroke-width="1" /></svg><div style="left:4px;top:49px;width:204px;height:25px;box-shadow:inset 1px 1px #fff,inset -1px -1px #808080;"></div><div style="left:7px;top:52px;width:3px;height:20px;box-shadow:inset 1px 1px #fff,inset -1px -1px #808080;"></div><svg style="left:18px;top:54px;" width="16" height="16" viewBox="0 0 16 16" shape-rendering="crispEdges"><path d="M2.5 1.5 h7 l3 3 v10 h-10 z" fill="#fff" stroke="#000" stroke-width="1" /><path d="M9.5 1.5 v3 h3" fill="none" stroke="#000" stroke-width="1" /></svg><svg style="left:41px;top:53px;" width="16" height="16" viewBox="0 0 16 16" shape-rendering="crispEdges"><path d="M1.5 13.5 v-8 h2 l1 -1 h3 l1 1 h3 v2" fill="#ffff80" stroke="#000" stroke-width="1" /><path d="M1.5 13.5 l3 -6 h11 l-3 6 z" fill="#808000" stroke="#000" stroke-width="1" /><path d="M9 2.5 q3 -2 5 1 M14.5 1 v3 h-3" fill="none" stroke="#000" stroke-width="1" shape-rendering="auto"/></svg><svg style="left:64px;top:60px;" width="7" height="4" viewBox="0 0 7 4" shape-rendering="crispEdges"><path d="M0 0 h5 l-2.5 3 z" fill="#000" stroke="none" stroke-width="1" /></svg><svg style="left:78px;top:54px;" width="16" height="16" viewBox="0 0 16 16" shape-rendering="crispEdges"><rect x="1.5" y="1.5" width="13" height="13" fill="#808000" stroke="#000"/><rect x="4" y="2" width="8" height="6" fill="#c0c0c0" /><rect x="4" y="10" width="8" height="5" fill="#000" /><rect x="9" y="11" width="2" height="3" fill="#c0c0c0" /><rect x="12" y="2" width="2" height="1" fill="#fff" /></svg><div style="left:101px;top:53px;width:1px;height:18px;background:#808080;"></div><div style="left:102px;top:53px;width:1px;height:18px;background:#fff;"></div><svg style="left:109px;top:53px;" width="16" height="16" viewBox="0 0 16 16" shape-rendering="crispEdges"><rect x="5.5" y="0.5" width="10" height="10" fill="#808000" stroke="#000"/><rect x="8" y="1" width="5" height="4" fill="#c0c0c0" /><rect x="8" y="7" width="5" height="4" fill="#000" /><rect x="11" y="8" width="1" height="2" fill="#c0c0c0" /><rect x="3.5" y="2.5" width="10" height="10" fill="#808000" stroke="#000"/><rect x="6" y="3" width="5" height="4" fill="#c0c0c0" /><rect x="6" y="9" width="5" height="4" fill="#000" /><rect x="9" y="10" width="1" height="2" fill="#c0c0c0" /><rect x="0.5" y="5.5" width="10" height="10" fill="#808000" stroke="#000"/><rect x="3" y="6" width="5" height="4" fill="#c0c0c0" /><rect x="3" y="12" width="5" height="4" fill="#000" /><rect x="6" y="13" width="1" height="2" fill="#c0c0c0" /></svg><svg style="left:131px;top:53px;" width="16" height="16" viewBox="0 0 16 16" shape-rendering="crispEdges"><path d="M5.5 7.5 v-5 h2 l1 -1 h3 l1 1 h3 v5 z" fill="#ffff80" stroke="#000" stroke-width="1" /><rect x="1.5" y="9.5" width="11" height="5" fill="#d4d0c8" stroke="#000"/><rect x="3" y="11" width="4" height="1" fill="#c00000" /><path d="M2.5 8 v-3 q0 -2 3 -2 M4 1 l2 2 l-2 2" fill="none" stroke="#000" stroke-width="1" shape-rendering="auto"/></svg><div style="left:155px;top:53px;width:1px;height:18px;background:#808080;"></div><div style="left:156px;top:53px;width:1px;height:18px;background:#fff;"></div><svg style="left:163px;top:53px;" width="16" height="16" viewBox="0 0 16 16" shape-rendering="crispEdges"><path d="M1.5 13.5 v-8 h2 l1 -1 h3 l1 1 h3 v2" fill="#fff" stroke="#000" stroke-width="1" /><path d="M1.5 13.5 l3 -6 h11 l-3 6 z" fill="#808000" stroke="#000" stroke-width="1" /><rect x="4" y="3" width="7" height="5" fill="#fff" stroke="#808080"/><path d="M10 3 h2 v-2 h2 v2 h2 v2 h-2 v2 h-2 v-2 h-2 z" fill="#00c000" stroke="#004000" stroke-width="0.5" /></svg><svg style="left:185px;top:53px;" width="16" height="16" viewBox="0 0 16 16" shape-rendering="crispEdges"><path d="M1.5 13.5 v-8 h2 l1 -1 h3 l1 1 h3 v2" fill="#fff" stroke="#000" stroke-width="1" /><path d="M1.5 13.5 l3 -6 h11 l-3 6 z" fill="#808000" stroke="#000" stroke-width="1" /><rect x="4" y="3" width="7" height="5" fill="#fff" stroke="#808080"/><rect x="9" y="2" width="7" height="3" fill="#e00000" stroke="#600000" stroke-width="0.5"/></svg><div style="left:208px;top:49px;width:36px;height:25px;box-shadow:inset 1px 1px #fff,inset -1px -1px #808080;"></div><div style="left:211px;top:52px;width:3px;height:20px;box-shadow:inset 1px 1px #fff,inset -1px -1px #808080;"></div><svg style="left:222px;top:53px;" width="16" height="16" viewBox="0 0 16 16" shape-rendering="crispEdges"><g shape-rendering="auto"><path d="M0.5 10.5 L7.5 14.5 L15.5 6.5 V8.5 L7.5 16 L0.5 12 Z" fill="#800080" stroke="#300030" stroke-width="0.6" /><path d="M0.5 9 L7.5 13 L15.5 5 V7 L7.5 15 L0.5 11 Z" fill="#fff" stroke="#808080" stroke-width="0.5" /><path d="M0.5 9 L9 0.5 L15.5 4.5 L7.5 13 Z" fill="#900090" stroke="#300030" stroke-width="0.8" /><text x="8.3" y="10" font-size="9" font-weight="bold" font-family="Liberation Sans" fill="#ffff00" text-anchor="middle" transform="rotate(8 8 7)">?</text></g></svg><div style="left:4px;top:74px;width:113px;height:27px;box-shadow:inset 1px 1px #fff,inset -1px -1px #808080;"></div><div style="left:7px;top:77px;width:3px;height:22px;box-shadow:inset 1px 1px #fff,inset -1px -1px #808080;"></div><svg style="left:18px;top:80px;" width="16" height="16" viewBox="0 0 16 16" shape-rendering="crispEdges"><path d="M6.5 0.5 h6 l3 3 v9 h-9 z" fill="#fff" stroke="#000" stroke-width="1" /><path d="M3.5 2.0 h6 l3 3 v9 h-9 z" fill="#fff" stroke="#000" stroke-width="1" /><path d="M0.5 3.5 h6 l3 3 v9 h-9 z" fill="#fff" stroke="#000" stroke-width="1" /></svg><svg style="left:41px;top:80px;" width="16" height="16" viewBox="0 0 16 16" shape-rendering="crispEdges"><rect x="5.5" y="0.5" width="9" height="8" fill="#c0c0c0" stroke="#000"/><rect x="6" y="1" width="8" height="2" fill="#000080" /><rect x="6" y="3" width="8" height="1" fill="#fff" /><rect x="3.5" y="3.5" width="9" height="8" fill="#c0c0c0" stroke="#000"/><rect x="4" y="4" width="8" height="2" fill="#000080" /><rect x="4" y="6" width="8" height="1" fill="#fff" /><rect x="0.5" y="6.5" width="9" height="8" fill="#c0c0c0" stroke="#000"/><rect x="1" y="7" width="8" height="2" fill="#000080" /><rect x="1" y="9" width="8" height="1" fill="#fff" /></svg><svg style="left:64px;top:80px;" width="16" height="16" viewBox="0 0 16 16" shape-rendering="crispEdges"><rect x="0.5" y="1.5" width="9" height="8" fill="#c0c0c0" stroke="#000"/><rect x="1" y="2" width="8" height="2" fill="#000080" /><path d="M6.5 5.5 h6 l3 3 v7 h-9 z" fill="#fff" stroke="#000" stroke-width="1" /><path d="M12 2 l1.5 -1.5 l1.5 1.5 M13.5 .5 v4 M2 12 l1.5 1.5 l1.5 -1.5 M3.5 10 v4" fill="none" stroke="#000" stroke-width="1" /></svg><div style="left:87px;top:79px;width:1px;height:18px;background:#808080;"></div><div style="left:88px;top:79px;width:1px;height:18px;background:#fff;"></div><svg style="left:95px;top:81px;" width="16" height="14" viewBox="0 0 16 14" shape-rendering="crispEdges"><rect x="0.5" y="0.5" width="14" height="12" fill="#fff" stroke="#000"/><rect x="1" y="1" width="13" height="2" fill="#000080" /><rect x="11" y="1" width="1" height="1" fill="#fff" /><rect x="13" y="1" width="1" height="1" fill="#fff" /><rect x="1" y="3" width="13" height="9" fill="url(#dotpat)"/></svg><div style="left:117px;top:74px;width:127px;height:27px;box-shadow:inset 1px 1px #fff,inset -1px -1px #808080;"></div><div style="left:120px;top:77px;width:3px;height:22px;box-shadow:inset 1px 1px #fff,inset -1px -1px #808080;"></div><svg style="left:133px;top:80px;" width="16" height="16" viewBox="0 0 16 16" shape-rendering="crispEdges"><path d="M3 1 L12 8 L3 15 Z" fill="#808080" stroke="none" stroke-width="1" shape-rendering="auto"/></svg><svg style="left:154px;top:86px;" width="7" height="4" viewBox="0 0 7 4" shape-rendering="crispEdges"><path d="M0 0 h5 l-2.5 3 z" fill="#000" stroke="none" stroke-width="1" /></svg><svg style="left:166px;top:80px;" width="16" height="16" viewBox="0 0 16 16" shape-rendering="crispEdges"><rect x="2" y="1" width="4" height="14" fill="#000080" /><rect x="9" y="1" width="4" height="14" fill="#000080" /><rect x="3" y="2" width="2" height="1" fill="#6060c0" /><rect x="10" y="2" width="2" height="1" fill="#6060c0" /><rect x="3" y="4" width="2" height="1" fill="#6060c0" /><rect x="10" y="4" width="2" height="1" fill="#6060c0" /><rect x="3" y="6" width="2" height="1" fill="#6060c0" /><rect x="10" y="6" width="2" height="1" fill="#6060c0" /><rect x="3" y="8" width="2" height="1" fill="#6060c0" /><rect x="10" y="8" width="2" height="1" fill="#6060c0" /><rect x="3" y="10" width="2" height="1" fill="#6060c0" /><rect x="10" y="10" width="2" height="1" fill="#6060c0" /><rect x="3" y="12" width="2" height="1" fill="#6060c0" /><rect x="10" y="12" width="2" height="1" fill="#6060c0" /></svg><div style="left:191px;top:79px;width:1px;height:18px;background:#808080;"></div><div style="left:192px;top:79px;width:1px;height:18px;background:#fff;"></div><svg style="left:198px;top:80px;" width="16" height="16" viewBox="0 0 16 16" shape-rendering="crispEdges"><path d="M1 3 q6 -3 9 3" fill="none" stroke="#808080" stroke-width="1" stroke-dasharray="1.5 1.5" shape-rendering="auto"/><path d="M8 6 l3 2 l1 -4 z" fill="#808080" stroke="none" stroke-width="1" /><rect x="6.5" y="9.5" width="6" height="5" fill="#d4d0c8" stroke="#808080"/><rect x="7.5" y="10.5" width="6" height="5" fill="none" stroke="#fff"/></svg><svg style="left:221px;top:80px;" width="16" height="16" viewBox="0 0 16 16" shape-rendering="crispEdges"><path d="M2 6 q4 -7 11 -1" fill="none" stroke="#808080" stroke-width="1" stroke-dasharray="1.5 1.5" shape-rendering="auto"/><path d="M11 4 l4 0 l-2 4 z" fill="#808080" stroke="none" stroke-width="1" /><rect x="3.5" y="9.5" width="6" height="5" fill="#d4d0c8" stroke="#808080"/><rect x="4.5" y="10.5" width="6" height="5" fill="none" stroke="#fff"/></svg><div style="left:244px;top:49px;width:1px;height:52px;background:#fff;"></div><div style="left:244px;top:49px;width:420px;height:1px;background:#fff;"></div><div style="left:244px;top:100px;width:776px;height:1px;background:#808080;"></div><div style="left:247px;top:52px;width:3px;height:46px;box-shadow:inset 1px 1px #fff,inset -1px -1px #808080;"></div><div style="left:250px;top:0;width:737px;height:67px;overflow:hidden;"><div class="face" style="left:61px;top:51px;width:56px;height:15px;"></div><div style="left:61px;top:53px;width:1px;height:13px;background:#fff;"></div><div style="left:62px;top:52px;width:1px;height:1px;background:#fff;"></div><div style="left:63px;top:51px;width:52px;height:1px;background:#fff;"></div><div style="left:115px;top:53px;width:1px;height:13px;background:#808080;"></div><div style="left:116px;top:53px;width:1px;height:13px;background:#404040;"></div><div style="left:115px;top:52px;width:1px;height:1px;background:#404040;"></div><span style="left:65.5px;top:54px;font-size:11px;letter-spacing:-0.281px;">Additional</span><div class="face" style="left:118px;top:51px;width:42px;height:15px;"></div><div style="left:118px;top:53px;width:1px;height:13px;background:#fff;"></div><div style="left:119px;top:52px;width:1px;height:1px;background:#fff;"></div><div style="left:120px;top:51px;width:38px;height:1px;background:#fff;"></div><div style="left:158px;top:53px;width:1px;height:13px;background:#808080;"></div><div style="left:159px;top:53px;width:1px;height:13px;background:#404040;"></div><div style="left:158px;top:52px;width:1px;height:1px;background:#404040;"></div><span style="left:123.5px;top:54px;font-size:11px;letter-spacing:-0.136px;">Win32</span><div class="face" style="left:161px;top:51px;width:44px;height:15px;"></div><div style="left:161px;top:53px;width:1px;height:13px;background:#fff;"></div><div style="left:162px;top:52px;width:1px;height:1px;background:#fff;"></div><div style="left:163px;top:51px;width:40px;height:1px;background:#fff;"></div><div style="left:203px;top:53px;width:1px;height:13px;background:#808080;"></div><div style="left:204px;top:53px;width:1px;height:13px;background:#404040;"></div><div style="left:203px;top:52px;width:1px;height:1px;background:#404040;"></div><span style="left:166px;top:54px;font-size:11px;letter-spacing:-0.487px;">System</span><div class="face" style="left:207px;top:51px;width:71px;height:15px;"></div><div style="left:207px;top:53px;width:1px;height:13px;background:#fff;"></div><div style="left:208px;top:52px;width:1px;height:1px;background:#fff;"></div><div style="left:209px;top:51px;width:67px;height:1px;background:#fff;"></div><div style="left:276px;top:53px;width:1px;height:13px;background:#808080;"></div><div style="left:277px;top:53px;width:1px;height:13px;background:#404040;"></div><div style="left:276px;top:52px;width:1px;height:1px;background:#404040;"></div><span style="left:212px;top:54px;font-size:11px;letter-spacing:-0.013px;">Data Access</span><div class="face" style="left:280px;top:51px;width:74px;height:15px;"></div><div style="left:280px;top:53px;width:1px;height:13px;background:#fff;"></div><div style="left:281px;top:52px;width:1px;height:1px;background:#fff;"></div><div style="left:282px;top:51px;width:70px;height:1px;background:#fff;"></div><div style="left:352px;top:53px;width:1px;height:13px;background:#808080;"></div><div style="left:353px;top:53px;width:1px;height:13px;background:#404040;"></div><div style="left:352px;top:52px;width:1px;height:1px;background:#404040;"></div><span style="left:285px;top:54px;font-size:11px;letter-spacing:-0.250px;">Data Controls</span><div class="face" style="left:356px;top:51px;width:59px;height:15px;"></div><div style="left:356px;top:53px;width:1px;height:13px;background:#fff;"></div><div style="left:357px;top:52px;width:1px;height:1px;background:#fff;"></div><div style="left:358px;top:51px;width:55px;height:1px;background:#fff;"></div><div style="left:413px;top:53px;width:1px;height:13px;background:#808080;"></div><div style="left:414px;top:53px;width:1px;height:13px;background:#404040;"></div><div style="left:413px;top:52px;width:1px;height:1px;background:#404040;"></div><span style="left:361.5px;top:54px;font-size:11px;letter-spacing:-0.386px;">dbExpress</span><div class="face" style="left:417px;top:51px;width:58px;height:15px;"></div><div style="left:417px;top:53px;width:1px;height:13px;background:#fff;"></div><div style="left:418px;top:52px;width:1px;height:1px;background:#fff;"></div><div style="left:419px;top:51px;width:54px;height:1px;background:#fff;"></div><div style="left:473px;top:53px;width:1px;height:13px;background:#808080;"></div><div style="left:474px;top:53px;width:1px;height:13px;background:#404040;"></div><div style="left:473px;top:52px;width:1px;height:1px;background:#404040;"></div><span style="left:422px;top:54px;font-size:11px;letter-spacing:-0.116px;">DataSnap</span><div class="face" style="left:477px;top:51px;width:39px;height:15px;"></div><div style="left:477px;top:53px;width:1px;height:13px;background:#fff;"></div><div style="left:478px;top:52px;width:1px;height:1px;background:#fff;"></div><div style="left:479px;top:51px;width:35px;height:1px;background:#fff;"></div><div style="left:514px;top:53px;width:1px;height:13px;background:#808080;"></div><div style="left:515px;top:53px;width:1px;height:13px;background:#404040;"></div><div style="left:514px;top:52px;width:1px;height:1px;background:#404040;"></div><span style="left:482px;top:54px;font-size:11px;letter-spacing:-0.539px;">BDE</span><div class="face" style="left:518px;top:51px;width:41px;height:15px;"></div><div style="left:518px;top:53px;width:1px;height:13px;background:#fff;"></div><div style="left:519px;top:52px;width:1px;height:1px;background:#fff;"></div><div style="left:520px;top:51px;width:37px;height:1px;background:#fff;"></div><div style="left:557px;top:53px;width:1px;height:13px;background:#808080;"></div><div style="left:558px;top:53px;width:1px;height:13px;background:#404040;"></div><div style="left:557px;top:52px;width:1px;height:1px;background:#404040;"></div><span style="left:523.5px;top:54px;font-size:11px;letter-spacing:-0.279px;">ADO</span><div class="face" style="left:561px;top:51px;width:55px;height:15px;"></div><div style="left:561px;top:53px;width:1px;height:13px;background:#fff;"></div><div style="left:562px;top:52px;width:1px;height:1px;background:#fff;"></div><div style="left:563px;top:51px;width:51px;height:1px;background:#fff;"></div><div style="left:614px;top:53px;width:1px;height:13px;background:#808080;"></div><div style="left:615px;top:53px;width:1px;height:13px;background:#404040;"></div><div style="left:614px;top:52px;width:1px;height:1px;background:#404040;"></div><span style="left:566px;top:54px;font-size:11px;letter-spacing:-0.231px;">InterBase</span><div class="face" style="left:618px;top:51px;width:74px;height:15px;"></div><div style="left:618px;top:53px;width:1px;height:13px;background:#fff;"></div><div style="left:619px;top:52px;width:1px;height:1px;background:#fff;"></div><div style="left:620px;top:51px;width:70px;height:1px;background:#fff;"></div><div style="left:690px;top:53px;width:1px;height:13px;background:#808080;"></div><div style="left:691px;top:53px;width:1px;height:13px;background:#404040;"></div><div style="left:690px;top:52px;width:1px;height:1px;background:#404040;"></div><span style="left:623px;top:54px;font-size:11px;letter-spacing:-0.009px;">WebServices</span><div class="face" style="left:693px;top:51px;width:60px;height:15px;"></div><div style="left:693px;top:53px;width:1px;height:13px;background:#fff;"></div><div style="left:694px;top:52px;width:1px;height:1px;background:#fff;"></div><div style="left:695px;top:51px;width:56px;height:1px;background:#fff;"></div><div style="left:751px;top:53px;width:1px;height:13px;background:#808080;"></div><div style="left:752px;top:53px;width:1px;height:13px;background:#404040;"></div><div style="left:751px;top:52px;width:1px;height:1px;background:#404040;"></div><span style="left:699px;top:54px;font-size:11px;letter-spacing:-0.038px;">Internet</span></div><div style="left:250px;top:66px;width:769px;height:1px;background:#fff;"></div><div style="left:1018px;top:66px;width:1px;height:35px;background:#808080;"></div><div class="face" style="left:253px;top:49px;width:58px;height:19px;"></div><div style="left:253px;top:51px;width:1px;height:17px;background:#fff;"></div><div style="left:254px;top:50px;width:1px;height:1px;background:#fff;"></div><div style="left:255px;top:49px;width:54px;height:1px;background:#fff;"></div><div style="left:309px;top:51px;width:1px;height:17px;background:#808080;"></div><div style="left:310px;top:51px;width:1px;height:17px;background:#404040;"></div><div style="left:309px;top:50px;width:1px;height:1px;background:#404040;"></div><span style="left:260.8px;top:52px;font-size:11px;letter-spacing:-0.268px;">Standard</span><div class="face" style="left:250px;top:49px;width:4px;height:19px;"></div><div class="face" style="left:250px;top:66px;width:59px;height:2px;"></div><div class="face" style="left:986px;top:49px;width:32px;height:16px;"></div><div style="left:986px;top:49px;width:16px;height:15px;box-shadow:inset -1px -1px #808080;"><svg style="left:0px;top:0px;" width="16" height="15" viewBox="0 0 16 15" shape-rendering="crispEdges"><path d="M9 3 v8 l-4 -4 z" fill="#000" stroke="none" stroke-width="1" /></svg></div><div style="left:1002px;top:49px;width:16px;height:15px;box-shadow:inset -1px -1px #808080,inset 1px 0 #fff;"><svg style="left:0px;top:0px;" width="16" height="15" viewBox="0 0 16 15" shape-rendering="crispEdges"><path d="M6 3 v8 l4 -4 z" fill="#000" stroke="none" stroke-width="1" /></svg></div><div class="chk" style="left:256px;top:70px;width:28px;height:28px;box-shadow:inset 1px 1px #808080,inset -1px -1px #fff;"><svg style="left:0px;top:0px;" width="28" height="28" viewBox="0 0 28 28" shape-rendering="crispEdges"><path d="M10.5 7.5 v13.0 l3.0 -3.0 l2.5 5.5 l2.0 -1.0 l-2.5 -5.5 h4.5 z" fill="#fff" stroke="#000" stroke-width="1" shape-rendering="auto" stroke-linejoin="miter"/></svg></div><svg style="left:298px;top:73px;" width="24" height="22" viewBox="0 0 24 22" shape-rendering="crispEdges"><rect x="1.5" y="1.5" width="21" height="19" fill="#fff" stroke="#808080"/><rect x="2" y="2" width="20" height="2" fill="#000080" /><rect x="2" y="2" width="2" height="1" fill="#fff" /><rect x="19" y="2" width="1" height="1" fill="#fff" /><rect x="21" y="2" width="1" height="1" fill="#fff" /><rect x="22" y="2" width="1" height="19" fill="#000" /><rect x="2" y="20" width="21" height="1" fill="#000" /><rect x="2" y="21" width="21" height="1" fill="#000" /><rect x="4.5" y="5.5" width="15" height="12" fill="#fff" stroke="#000"/><rect x="5" y="6" width="14" height="2" fill="#000080" /><rect x="5" y="6" width="2" height="1" fill="#fff" /><rect x="16" y="6" width="1" height="1" fill="#fff" /><rect x="18" y="6" width="1" height="1" fill="#fff" /><rect x="5" y="17" width="15" height="1" fill="#000" /></svg><svg style="left:326px;top:73px;" width="24" height="22" viewBox="0 0 24 22" shape-rendering="crispEdges"><rect x="1" y="1" width="20" height="4" fill="#fff" /><rect x="1" y="5" width="20" height="1" fill="#000" /><rect x="20" y="2" width="1" height="4" fill="#000" /><rect x="1" y="1" width="1" height="4" fill="#808080" /><rect x="1" y="1" width="20" height="1" fill="#808080" /><rect x="2" y="2" width="6" height="3" fill="#000080" /><rect x="3" y="3" width="4" height="1" fill="#fff" /><rect x="10" y="3" width="3" height="1" fill="#000080" /><rect x="14" y="3" width="3" height="1" fill="#000080" /><rect x="18" y="3" width="2" height="1" fill="#000080" /><rect x="2" y="5" width="11" height="12" fill="#fff" /><rect x="12" y="6" width="1" height="12" fill="#000" /><rect x="3" y="17" width="10" height="1" fill="#000" /><rect x="2" y="5" width="1" height="12" fill="#808080" /><rect x="4" y="7" width="6" height="1" fill="#000080" /><rect x="4" y="9" width="4" height="1" fill="#000080" /><rect x="4" y="11" width="6" height="1" fill="#000080" /><rect x="3" y="13" width="9" height="1" fill="#000080" /><rect x="4" y="15" width="4" height="1" fill="#000080" /></svg><svg style="left:358px;top:73px;" width="20" height="22" viewBox="0 0 20 22" shape-rendering="crispEdges"><rect x="0.5" y="0.5" width="9" height="11" fill="#fff" stroke="#808080"/><rect x="2" y="2" width="5" height="1" fill="#000080" /><rect x="2" y="4" width="4" height="1" fill="#000080" /><rect x="1" y="6" width="8" height="3" fill="#000080" /><rect x="2" y="10" width="4" height="1" fill="#000080" /><path d="M7.5 7.5 v11.700000000000001 l2.7 -2.7 l2.25 4.95 l1.8 -0.9 l-2.25 -4.95 h4.05 z" fill="#fff" stroke="#000" stroke-width="1" shape-rendering="auto" stroke-linejoin="miter"/></svg><svg style="left:384px;top:76px;" width="20" height="16" viewBox="0 0 20 16" shape-rendering="crispEdges"><text x="0" y="14" font-family="Liberation Serif" font-weight="bold" font-size="18" fill="#000" shape-rendering="auto" transform="translate(2 0) scale(1.15 1)">A</text></svg><svg style="left:410px;top:76px;" width="24" height="15" viewBox="0 0 24 15" shape-rendering="crispEdges"><rect x="0" y="0" width="24" height="15" fill="#fff" /><rect x="0" y="0" width="24" height="1" fill="#808080" /><rect x="0" y="0" width="1" height="15" fill="#808080" /><rect x="1" y="1" width="22" height="1" fill="#000" /><rect x="1" y="1" width="1" height="13" fill="#000" /><text x="3" y="12" font-family="Liberation Sans" font-weight="bold" font-size="11" fill="#000080" shape-rendering="auto">ab</text><rect x="18" y="3" width="1" height="10" fill="#000" /><rect x="16" y="3" width="5" height="1" fill="#000" /><rect x="16" y="12" width="5" height="1" fill="#000" /></svg><svg style="left:442px;top:75px;" width="16" height="18" viewBox="0 0 16 18" shape-rendering="crispEdges"><rect x="0.5" y="0.5" width="15" height="17" fill="#fff" stroke="#000"/><rect x="1" y="1" width="14" height="1" fill="#808080" /><rect x="2" y="3" width="3" height="1" fill="#000080" /><rect x="2" y="5" width="11" height="1" fill="#000080" /><rect x="2" y="7" width="11" height="1" fill="#000080" /><rect x="2" y="9" width="11" height="1" fill="#000080" /><rect x="2" y="11" width="11" height="1" fill="#000080" /><rect x="2" y="13" width="11" height="1" fill="#000080" /><rect x="2" y="15" width="11" height="1" fill="#000080" /></svg><svg style="left:468px;top:78px;" width="20" height="11" viewBox="0 0 20 11" shape-rendering="crispEdges"><rect x="0" y="0" width="20" height="11" fill="#d4d0c8" /><rect x="0" y="0" width="19" height="1" fill="#fff" /><rect x="0" y="0" width="1" height="10" fill="#fff" /><rect x="0" y="10" width="20" height="1" fill="#000" /><rect x="19" y="0" width="1" height="11" fill="#000" /><rect x="1" y="9" width="18" height="1" fill="#808080" /><rect x="18" y="1" width="1" height="9" fill="#808080" /><text x="10" y="8.5" font-family="Liberation Sans" font-weight="bold" font-size="8" text-anchor="middle" fill="#000" shape-rendering="auto">OK</text></svg><svg style="left:500px;top:78px;" width="13" height="13" viewBox="0 0 13 13" shape-rendering="crispEdges"><rect x="0" y="0" width="13" height="13" fill="#fff" /><rect x="0" y="0" width="13" height="1" fill="#808080" /><rect x="0" y="0" width="1" height="13" fill="#808080" /><rect x="1" y="1" width="11" height="1" fill="#000" /><rect x="1" y="1" width="1" height="11" fill="#000" /><rect x="12" y="0" width="1" height="13" fill="#fff" /><path d="M3.5 3.5 L10 10 M10 3.5 L3.5 10" fill="none" stroke="#000" stroke-width="2.2" shape-rendering="auto"/></svg><svg style="left:528px;top:78px;" width="13" height="13" viewBox="0 0 13 13" shape-rendering="crispEdges"><circle cx="6.5" cy="6.5" r="5.5" fill="#fff" stroke="#000" stroke-width="1.3" shape-rendering="auto"/><circle cx="6.5" cy="6.5" r="2.8" fill="#000" shape-rendering="auto"/></svg><svg style="left:552px;top:74px;" width="20" height="19" viewBox="0 0 20 19" shape-rendering="crispEdges"><rect x="0.5" y="0.5" width="19" height="18" fill="#fff" stroke="#000"/><rect x="2" y="2" width="10" height="1" fill="#000080" /><rect x="2" y="4" width="10" height="1" fill="#000080" /><rect x="2" y="6" width="10" height="1" fill="#000080" /><rect x="2" y="12" width="10" height="1" fill="#000080" /><rect x="2" y="14" width="10" height="1" fill="#000080" /><rect x="2" y="16" width="10" height="1" fill="#000080" /><rect x="1" y="8" width="13" height="3" fill="#000080" /><rect x="14" y="1" width="5" height="17" fill="#d4d0c8" /><rect x="14" y="1" width="1" height="17" fill="#000" /><rect x="15" y="2" width="3" height="3" fill="#fff" stroke="#000" stroke-width="1"/><rect x="15" y="14" width="3" height="3" fill="#fff" stroke="#000" stroke-width="1"/></svg><svg style="left:580px;top:75px;" width="20" height="18" viewBox="0 0 20 18" shape-rendering="crispEdges"><rect x="0.5" y="0.5" width="19" height="5" fill="#fff" stroke="#000"/><rect x="2" y="2" width="10" height="2" fill="#000080" /><rect x="15" y="1" width="4" height="4" fill="#d4d0c8" stroke="#000"/><rect x="2.5" y="5.5" width="17" height="12" fill="#fff" stroke="#000"/><rect x="4" y="8" width="11" height="1" fill="#000080" /><rect x="3" y="10" width="16" height="3" fill="#000080" /><rect x="4" y="14" width="11" height="1" fill="#000080" /></svg><svg style="left:607px;top:81px;" width="22" height="7" viewBox="0 0 22 7" shape-rendering="crispEdges"><rect x="0.5" y="0.5" width="21" height="6" fill="#d4d0c8" stroke="#000"/><rect x="2" y="2" width="3" height="3" fill="#fff" /><rect x="7" y="2" width="3" height="3" fill="#fff" /><rect x="12" y="2" width="3" height="3" fill="#fff" /><rect x="17" y="2" width="3" height="3" fill="#fff" /><rect x="6" y="1" width="1" height="5" fill="#000" /><rect x="11" y="1" width="1" height="5" fill="#000" /><rect x="16" y="1" width="1" height="5" fill="#000" /></svg><svg style="left:636px;top:73px;" width="21" height="20" viewBox="0 0 21 20" shape-rendering="crispEdges"><rect x="0.5" y="2.5" width="19" height="16" fill="none" stroke="#808080"/><rect x="1.5" y="3.5" width="19" height="16" fill="none" stroke="#fff"/><rect x="3" y="0" width="8" height="3" fill="#000080" /></svg><svg style="left:664px;top:73px;" width="21" height="20" viewBox="0 0 21 20" shape-rendering="crispEdges"><rect x="0.5" y="2.5" width="19" height="16" fill="none" stroke="#808080"/><rect x="1.5" y="3.5" width="19" height="16" fill="none" stroke="#fff"/><rect x="3" y="0" width="8" height="3" fill="#000080" /><rect x="4" y="5" width="1" height="1" fill="#000" /><rect x="3" y="6" width="3" height="1" fill="#000" /><rect x="4" y="7" width="1" height="1" fill="#000" /><rect x="8" y="6" width="8" height="1" fill="#000080" /><rect x="4" y="9" width="1" height="1" fill="#000" /><rect x="3" y="10" width="3" height="1" fill="#000" /><rect x="4" y="11" width="1" height="1" fill="#000" /><rect x="8" y="10" width="8" height="1" fill="#000080" /><rect x="4" y="13" width="1" height="1" fill="#000" /><rect x="3" y="14" width="3" height="1" fill="#000" /><rect x="4" y="15" width="1" height="1" fill="#000" /><rect x="8" y="14" width="8" height="1" fill="#000080" /></svg><svg style="left:692px;top:74px;" width="20" height="19" viewBox="0 0 20 19" shape-rendering="crispEdges"><rect x="0.5" y="0.5" width="19" height="18" fill="none" stroke="#fff"/><rect x="1.5" y="1.5" width="18" height="17" fill="none" stroke="#808080"/><rect x="1" y="1" width="18" height="17" fill="#d4d0c8" /><rect x="0" y="0" width="20" height="1" fill="#fff" /><rect x="0" y="0" width="1" height="19" fill="#fff" /><rect x="19" y="0" width="1" height="19" fill="#808080" /><rect x="0" y="18" width="20" height="1" fill="#808080" /></svg><svg style="left:720px;top:73px;" width="24" height="24" viewBox="0 0 24 24" shape-rendering="crispEdges"><rect x="6.5" y="0.5" width="15" height="12" fill="#fff" stroke="#000"/><rect x="7" y="1" width="14" height="2" fill="#000080" /><rect x="8" y="5" width="6" height="1" fill="#000080" /><rect x="8" y="7" width="6" height="2" fill="#000080" /><rect x="15" y="3" width="6" height="9" fill="url(#dotpat)" /><rect x="0" y="13" width="12" height="7" fill="#d4d0c8" /><rect x="0" y="13" width="11" height="1" fill="#fff" /><rect x="0" y="13" width="1" height="6" fill="#fff" /><rect x="0" y="19" width="12" height="1" fill="#000" /><rect x="11" y="13" width="1" height="7" fill="#000" /><text x="5.5" y="19" font-family="Liberation Sans" font-weight="bold" font-size="6" text-anchor="middle" fill="#000" shape-rendering="auto">OK</text><path d="M13.5 8.5 v11.049999999999999 l2.55 -2.55 l2.125 4.675 l1.7 -0.85 l-2.125 -4.675 h3.8249999999999997 z" fill="#fff" stroke="#000" stroke-width="1" shape-rendering="auto" stroke-linejoin="miter"/></svg>
<!-- p_taskbar -->
<div class="face" style="left:0px;top:738px;width:1024px;height:30px;"></div><div style="left:0px;top:739px;width:1024px;height:1px;background:#fff;"></div><div class="btn" style="left:2px;top:742px;width:51px;height:22px;"></div><svg style="left:4px;top:745px;shape-rendering:auto" width="16" height="16" viewBox="0 0 16 16" shape-rendering="crispEdges"><path d="M1 3 q3 -2 6 0 l-1 5 q-3 -2 -6 0 z" fill="#e04020" stroke="none" stroke-width="1" /><path d="M8 3.5 q3 2 6 0 l-1 5 q-3 2 -6 0 z" fill="#40a030" stroke="none" stroke-width="1" /><path d="M0 9 q3 -2 6 0 l-1 5 q-3 -2 -6 0 z" fill="#3060d0" stroke="none" stroke-width="1" /><path d="M7 9.5 q3 2 6 0 l-1 5 q-3 2 -6 0 z" fill="#f0c020" stroke="none" stroke-width="1" /></svg><span style="left:22px;top:747px;font-size:11.5px;letter-spacing:0.118px;font-weight:bold;">Пуск</span><svg style="left:61px;top:745px;shape-rendering:auto" width="16" height="16" viewBox="0 0 16 16" shape-rendering="crispEdges"><circle cx="8" cy="8" r="7.5" fill="#fff" stroke="#c06000" stroke-width="1"/><path d="M8 0.5 A7.5 7.5 0 0 1 15.5 8 L11 8 A3 3 0 0 0 8 5 Z" fill="#50b030" stroke="none" stroke-width="1" /><path d="M15.5 8 A7.5 7.5 0 0 1 8 15.5 L8 11 A3 3 0 0 0 11 8 Z" fill="#e0b020" stroke="none" stroke-width="1" /><path d="M8 15.5 A7.5 7.5 0 0 1 0.5 8 L5 8 A3 3 0 0 0 8 11 Z" fill="#2060d0" stroke="none" stroke-width="1" /><path d="M0.5 8 A7.5 7.5 0 0 1 8 0.5 L8 5 A3 3 0 0 0 5 8 Z" fill="#e05020" stroke="none" stroke-width="1" /><circle cx="8" cy="8" r="4" fill="#fff"/><path d="M6.5 5.5 L11 8 L6.5 10.5 Z" fill="#000" stroke="none" stroke-width="1" /></svg><svg style="left:84px;top:745px;shape-rendering:auto" width="16" height="16" viewBox="0 0 16 16" shape-rendering="crispEdges"><rect x="1.5" y="2.5" width="13" height="12" fill="#e8f4ff" stroke="#2080e0" rx="2"/><rect x="4" y="4" width="8" height="9" fill="#fff" stroke="#3090f0"/><path d="M6 10 L10 6 M7 6 h3 v3" fill="none" stroke="#2060c0" stroke-width="1.2" /><rect x="12" y="4" width="3" height="2" fill="#e04020" /></svg><div class="chk" style="left:108px;top:742px;width:159px;height:22px;box-shadow:inset -1px -1px #fff,inset 1px 1px #404040,inset -2px -2px #d4d0c8,inset 2px 2px #808080;"></div><svg style="left:113px;top:746px;" width="16" height="16" viewBox="0 0 16 16" shape-rendering="crispEdges"><rect x="0" y="2" width="4" height="7" fill="#0020e0" /><rect x="0" y="2" width="4" height="1" fill="#2060d0" /><rect x="1" y="3" width="1" height="1" fill="#ffe000" /><rect x="1" y="5" width="1" height="1" fill="#ffe000" /><rect x="4" y="0" width="5" height="8" fill="#0000ff" /><rect x="4" y="0" width="5" height="1" fill="#20a0e0" /><rect x="8" y="1" width="1" height="3" fill="#000080" /><rect x="5" y="1" width="1" height="2" fill="#ffe000" /><rect x="7" y="1" width="1" height="2" fill="#ffe000" /><rect x="12" y="2" width="4" height="9" fill="#000080" /><rect x="14" y="3" width="1" height="1" fill="#ffe000" /><rect x="14" y="5" width="1" height="1" fill="#ffe000" /><rect x="14" y="7" width="1" height="1" fill="#ffe000" /><rect x="8" y="3" width="5" height="8" fill="#0000ff" /><rect x="8" y="3" width="5" height="1" fill="#20a0e0" /><rect x="9" y="4" width="1" height="1" fill="#ffe000" /><rect x="11" y="4" width="1" height="1" fill="#ffe000" /><rect x="9" y="6" width="1" height="1" fill="#ffe000" /><rect x="11" y="6" width="1" height="1" fill="#ffe000" /><rect x="11" y="8" width="1" height="1" fill="#ffe000" /><path d="M0 8 Q0 7 2 7 H7 L8 9 H16 V13 Q16 14.5 14 14.5 H8 L7 16 H3 Q0 16 0 13 Z" fill="#0030c0" shape-rendering="auto"/><path d="M6.2 8.2 H4 Q2 8.2 2 10.5 V12.5 Q2 15 4 15 H6.2" fill="none" stroke="#ffd000" stroke-width="1.7" shape-rendering="auto"/><path d="M8.5 9.6 L9.3 10.7 L10.4 11.5 L9.3 12.3 L8.5 13.4 L7.7 12.3 L6.6 11.5 L7.7 10.7 Z M13.5 9.6 L14.3 10.7 L15.4 11.5 L14.3 12.3 L13.5 13.4 L12.7 12.3 L11.6 11.5 L12.7 10.7 Z" fill="#ffd000" shape-rendering="auto"/></svg><span style="left:133px;top:747px;font-size:12px;letter-spacing:-0.044px;font-weight:bold;">C++Builder 6</span><div class="btn" style="left:270px;top:742px;width:160px;height:22px;"></div><svg style="left:274px;top:745px;" width="16" height="16" viewBox="0 0 16 16" shape-rendering="crispEdges"><rect x="3" y="0" width="13" height="16" fill="#fff" /><rect x="3" y="0" width="12" height="1" fill="#808080" /><rect x="3" y="0" width="1" height="15" fill="#808080" /><rect x="15" y="2" width="1" height="14" fill="#000" /><rect x="4" y="15" width="12" height="1" fill="#000" /><path d="M12 0 L15.5 3.5" fill="none" stroke="#000" stroke-width="1" shape-rendering="auto"/><rect x="13" y="0" width="3" height="2" fill="#d4d0c8" /><rect x="11" y="5" width="3" height="1" fill="#c0c0c0" /><rect x="11" y="8" width="3" height="1" fill="#c0c0c0" /><rect x="11" y="11" width="3" height="1" fill="#c0c0c0" /><rect x="6" y="13" width="8" height="1" fill="#c0c0c0" /><rect x="0" y="2" width="10" height="10" fill="#0000c0" /><rect x="0" y="2" width="1" height="1" fill="#000" /><rect x="0" y="11" width="1" height="1" fill="#000" /><rect x="0" y="2" width="1" height="1" fill="#000" /><rect x="9" y="2" width="1" height="1" fill="#000" /><rect x="2" y="2" width="1" height="1" fill="#000" /><rect x="2" y="11" width="1" height="1" fill="#000" /><rect x="0" y="4" width="1" height="1" fill="#000" /><rect x="9" y="4" width="1" height="1" fill="#000" /><rect x="4" y="2" width="1" height="1" fill="#000" /><rect x="4" y="11" width="1" height="1" fill="#000" /><rect x="0" y="6" width="1" height="1" fill="#000" /><rect x="9" y="6" width="1" height="1" fill="#000" /><rect x="6" y="2" width="1" height="1" fill="#000" /><rect x="6" y="11" width="1" height="1" fill="#000" /><rect x="0" y="8" width="1" height="1" fill="#000" /><rect x="9" y="8" width="1" height="1" fill="#000" /><rect x="8" y="2" width="1" height="1" fill="#000" /><rect x="8" y="11" width="1" height="1" fill="#000" /><rect x="0" y="10" width="1" height="1" fill="#000" /><rect x="9" y="10" width="1" height="1" fill="#000" /><rect x="1" y="3" width="8" height="8" fill="#fff" /><rect x="1" y="4" width="8" height="1" fill="#0000c0" /><path d="M2 5.5 L3.5 10 L5 6.5 L6.5 10 L8 5.5" fill="none" stroke="#000080" stroke-width="1.4" shape-rendering="auto" stroke-linejoin="miter"/></svg><span style="left:294px;top:747px;font-size:11px;letter-spacing:-0.019px;">Тема 8.doc - Microsoft ...</span><div class="btn" style="left:432px;top:742px;width:160px;height:22px;"></div><svg style="left:436px;top:745px;" width="16" height="16" viewBox="0 0 16 16" shape-rendering="crispEdges"><rect x="3" y="0" width="13" height="16" fill="#fff" /><rect x="3" y="0" width="12" height="1" fill="#808080" /><rect x="3" y="0" width="1" height="15" fill="#808080" /><rect x="15" y="2" width="1" height="14" fill="#000" /><rect x="4" y="15" width="12" height="1" fill="#000" /><path d="M12 0 L15.5 3.5" fill="none" stroke="#000" stroke-width="1" shape-rendering="auto"/><rect x="13" y="0" width="3" height="2" fill="#d4d0c8" /><rect x="11" y="5" width="3" height="1" fill="#c0c0c0" /><rect x="11" y="8" width="3" height="1" fill="#c0c0c0" /><rect x="11" y="11" width="3" height="1" fill="#c0c0c0" /><rect x="6" y="13" width="8" height="1" fill="#c0c0c0" /><rect x="0" y="2" width="10" height="10" fill="#0000c0" /><rect x="0" y="2" width="1" height="1" fill="#000" /><rect x="0" y="11" width="1" height="1" fill="#000" /><rect x="0" y="2" width="1" height="1" fill="#000" /><rect x="9" y="2" width="1" height="1" fill="#000" /><rect x="2" y="2" width="1" height="1" fill="#000" /><rect x="2" y="11" width="1" height="1" fill="#000" /><rect x="0" y="4" width="1" height="1" fill="#000" /><rect x="9" y="4" width="1" height="1" fill="#000" /><rect x="4" y="2" width="1" height="1" fill="#000" /><rect x="4" y="11" width="1" height="1" fill="#000" /><rect x="0" y="6" width="1" height="1" fill="#000" /><rect x="9" y="6" width="1" height="1" fill="#000" /><rect x="6" y="2" width="1" height="1" fill="#000" /><rect x="6" y="11" width="1" height="1" fill="#000" /><rect x="0" y="8" width="1" height="1" fill="#000" /><rect x="9" y="8" width="1" height="1" fill="#000" /><rect x="8" y="2" width="1" height="1" fill="#000" /><rect x="8" y="11" width="1" height="1" fill="#000" /><rect x="0" y="10" width="1" height="1" fill="#000" /><rect x="9" y="10" width="1" height="1" fill="#000" /><rect x="1" y="3" width="8" height="8" fill="#fff" /><rect x="1" y="4" width="8" height="1" fill="#0000c0" /><path d="M2 5.5 L3.5 10 L5 6.5 L6.5 10 L8 5.5" fill="none" stroke="#000080" stroke-width="1.4" shape-rendering="auto" stroke-linejoin="miter"/></svg><span style="left:456px;top:747px;font-size:11px;letter-spacing:0.139px;">Документ2 - Microsoft ...</span><div class="btn" style="left:595px;top:742px;width:160px;height:22px;"></div><svg style="left:599px;top:745px;" width="16" height="16" viewBox="0 0 16 16" shape-rendering="crispEdges"><g shape-rendering="auto"><path d="M0.5 10.5 L7.5 14.5 L15.5 6.5 V8.5 L7.5 16 L0.5 12 Z" fill="#800080" stroke="#300030" stroke-width="0.6" /><path d="M0.5 9 L7.5 13 L15.5 5 V7 L7.5 15 L0.5 11 Z" fill="#fff" stroke="#808080" stroke-width="0.5" /><path d="M0.5 9 L9 0.5 L15.5 4.5 L7.5 13 Z" fill="#900090" stroke="#300030" stroke-width="0.8" /><text x="8.3" y="10" font-size="9" font-weight="bold" font-family="Liberation Sans" fill="#ffff00" text-anchor="middle" transform="rotate(8 8 7)">?</text></g></svg><span style="left:619px;top:747px;font-size:11px;letter-spacing:-0.160px;">Borland C++Builder Help</span><div class="btn" style="left:758px;top:742px;width:160px;height:22px;"></div><svg style="left:762px;top:745px;" width="16" height="16" viewBox="0 0 16 16" shape-rendering="crispEdges"><rect x="1" y="3" width="5" height="8" fill="#0000e0" /><rect x="2" y="4" width="1" height="1" fill="#ffe000" /><rect x="4" y="4" width="1" height="1" fill="#ffe000" /><rect x="2" y="6" width="1" height="1" fill="#ffe000" /><rect x="4" y="6" width="1" height="1" fill="#ffe000" /><rect x="2" y="8" width="1" height="1" fill="#ffe000" /><rect x="4" y="8" width="1" height="1" fill="#ffe000" /><rect x="11" y="2" width="5" height="10" fill="#000080" /><rect x="13" y="4" width="1" height="1" fill="#ffe000" /><rect x="13" y="6" width="1" height="1" fill="#ffe000" /><rect x="13" y="8" width="1" height="1" fill="#ffe000" /><rect x="5" y="1" width="5" height="10" fill="#0000ff" /><rect x="5" y="1" width="5" height="1" fill="#20a0e0" /><rect x="5" y="1" width="1" height="10" fill="#20a0e0" /><rect x="6" y="3" width="1" height="1" fill="#ffe000" /><rect x="8" y="3" width="1" height="1" fill="#ffe000" /><rect x="6" y="7" width="1" height="1" fill="#ffe000" /><rect x="8" y="7" width="1" height="1" fill="#ffe000" /><rect x="7" y="10" width="1" height="1" fill="#ffe000" /><rect x="9" y="4" width="5" height="10" fill="#0000ff" /><rect x="9" y="4" width="5" height="1" fill="#20a0e0" /><rect x="9" y="4" width="1" height="10" fill="#20a0e0" /><rect x="10" y="5" width="1" height="1" fill="#ffe000" /><rect x="12" y="5" width="1" height="1" fill="#ffe000" /><rect x="10" y="7" width="1" height="1" fill="#ffe000" /><rect x="12" y="7" width="1" height="1" fill="#ffe000" /><rect x="10" y="9" width="1" height="1" fill="#ffe000" /><rect x="12" y="9" width="1" height="1" fill="#ffe000" /><rect x="11" y="12" width="1" height="1" fill="#ffe000" /><rect x="11" y="13" width="1" height="1" fill="#ffe000" /></svg><span style="left:782px;top:747px;font-size:11px;letter-spacing:-0.127px;">lr011p</span><div style="left:929px;top:745px;width:13px;height:16px;background:#0a246a;overflow:hidden;"><span style="left:1px;top:1px;font-size:11px;color:#fff;">EN</span></div><div class="thin-sunk" style="left:945px;top:742px;width:77px;height:22px;"></div><span style="left:949.5px;top:745px;font-size:14px;letter-spacing:-0.162px;font-weight:bold;">‹‹</span><svg style="left:963px;top:744px;" width="17" height="17" viewBox="0 0 17 17" shape-rendering="crispEdges"><rect x="1.5" y="3.5" width="11" height="11" fill="#808040" stroke="#000"/><rect x="4" y="1.5" width="6" height="3" fill="#c0c060" stroke="#000"/><rect x="6" y="7" width="5" height="4" fill="#e02020" /><rect x="11" y="7" width="5" height="4" fill="#2040e0" /><rect x="6" y="11" width="5" height="4" fill="#e0e020" /><rect x="11" y="11" width="5" height="4" fill="#20a020" /><rect x="6.5" y="7.5" width="9" height="7" fill="none" stroke="#000" stroke-width="0.6"/></svg><span style="left:986.5px;top:747px;font-size:11px;letter-spacing:-0.105px;">12:20</span>
</div>
</body></html>
